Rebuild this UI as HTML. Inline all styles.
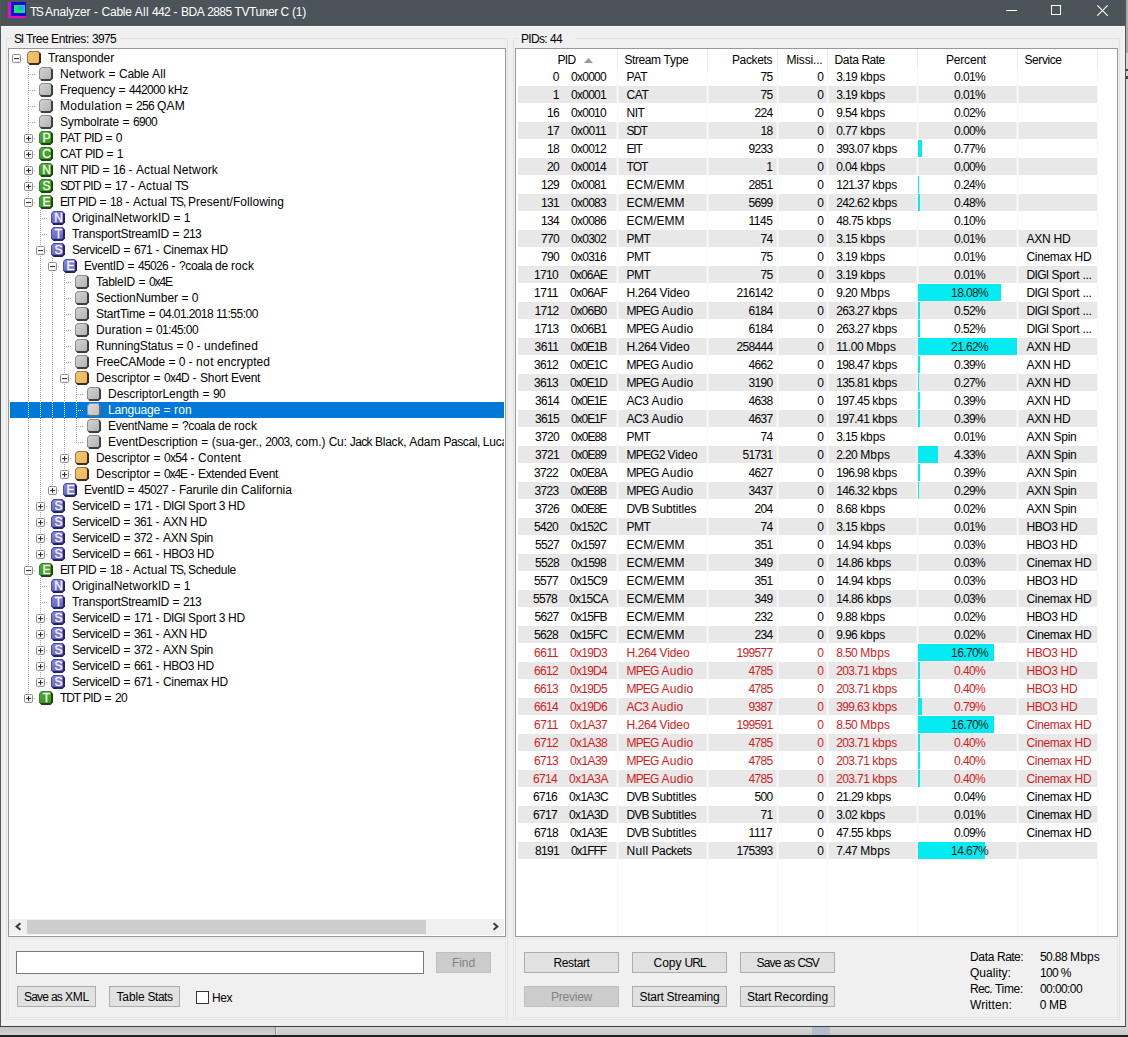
<!DOCTYPE html><html><head><meta charset="utf-8"><title>TS Analyzer</title><style>
html,body{margin:0;padding:0}
body{width:1128px;height:1037px;overflow:hidden;position:relative;background:#c9c9c9;font-family:"Liberation Sans",sans-serif;font-size:12px;line-height:16px}
#w div,#w svg,#w span,#w i{position:absolute;display:block}
#w span{white-space:pre;height:16px}
#w .k{top:0}
.ex{width:9px;height:9px;box-sizing:border-box;border:1px solid #8e8e90;border-radius:1.5px;background:linear-gradient(135deg,#fff 30%,#e4e4ee)}
.ic{width:14px;height:14px;clip-path:polygon(2.5px 0,11.5px 0,14px 2.5px,14px 11.5px,11.5px 14px,2.5px 14px,0 11.5px,0 2.5px)}
.ic:before{content:"";position:absolute;left:1px;top:1px;width:11.4px;height:11.4px;clip-path:polygon(1.9px 0,9.5px 0,11.4px 1.9px,11.4px 9.5px,9.5px 11.4px,1.9px 11.4px,0 9.5px,0 1.9px)}
.icg{background:linear-gradient(135deg,#8e8e8e 50%,#3e3e3e 50%)}
.icg:before{background:linear-gradient(135deg,#d4d4d4,#b2b2b2)}
.ics{background:linear-gradient(135deg,#7c9cc8 50%,#5a6c88 50%)}
.ics:before{background:linear-gradient(135deg,#e2dcd8,#c4bcb8)}
.ico{background:linear-gradient(135deg,#9a7840 50%,#3e2e14 50%)}
.ico:before{background:linear-gradient(135deg,#f6c864,#e6b668)}
.icG{background:linear-gradient(135deg,#3a8426 50%,#184a0e 50%)}
.icG:before{background:linear-gradient(170deg,#4cac32,#3c9428)}
.icB{background:linear-gradient(135deg,#4c4ca4 50%,#24245c 50%)}
.icB:before{background:linear-gradient(170deg,#8686ec,#6262c4)}
.ic b{position:absolute;left:0.5px;top:0;width:14px;height:14px;text-align:center;color:#f4fff0;font-size:12px;line-height:15px;font-weight:normal;-webkit-text-stroke:0.3px #f4fff0}
</style></head><body><div id="w">
<div style="left:0px;top:0px;width:1128px;height:1037px;background:#c9c9c9"></div>
<div style="left:1126px;top:0px;width:2px;height:53px;background:#a9a9a9"></div>
<div style="left:1126px;top:53px;width:2px;height:982px;background:#d2d2d2"></div>
<div style="left:1126px;top:69px;width:2px;height:2px;background:#444"></div>
<div style="left:1126px;top:76px;width:2px;height:3px;background:#444"></div>
<div style="left:0px;top:1027px;width:1128px;height:8px;background:linear-gradient(#c4c4c2,#d4d4d2)"></div>
<div style="left:275px;top:1027px;width:1px;height:8px;background:#8c8c8c"></div>
<div style="left:276px;top:1027px;width:852px;height:8px;background:linear-gradient(#d6d6d4,#cacac8)"></div>
<div style="left:276px;top:1028px;width:1px;height:7px;background:#e6e6e4"></div>
<div style="left:812px;top:1027px;width:18px;height:8px;background:#b4bccb"></div>
<div style="left:0px;top:1035px;width:1128px;height:2px;background:#1e2226"></div>
<div style="left:0px;top:0px;width:1126px;height:1027px;background:#f0f0f0"></div>
<div style="left:0px;top:0px;width:1126px;height:26px;background:#4b5459"></div>
<div style="left:0px;top:26px;width:1126px;height:1px;background:#fafafa"></div>
<div style="left:0px;top:0px;width:1px;height:1027px;background:#50565a"></div>
<div style="left:1125px;top:0px;width:1px;height:1027px;background:#50565a"></div>
<div style="left:0px;top:1026px;width:1126px;height:1px;background:#3c3f41"></div>
<div style="left:8px;top:2px;width:18px;height:16px;background:#e010c0"></div>
<div style="left:11px;top:2px;width:15px;height:14px;background:#1408e8"></div>
<div style="left:14px;top:5px;width:11px;height:8px;background:linear-gradient(90deg,#10f040,#20d890)"></div>
<div style="left:18px;top:6px;width:6px;height:4px;background:#28a8e8"></div>
<div style="left:1006px;top:10px;width:11px;height:1px;background:#fff"></div>
<div style="left:1051px;top:5px;width:10px;height:10px;border:1px solid #fff;box-sizing:border-box"></div>
<svg style="left:1097px;top:5px" width="11" height="11" viewBox="0 0 11 11"><path d="M0.3 0.3L10.7 10.7M10.7 0.3L0.3 10.7" stroke="#fff" stroke-width="1.1" fill="none"/></svg>
<div style="left:6px;top:38px;width:502px;height:982px;border:1px solid #e2e2e2;box-sizing:border-box"></div>
<div style="left:513px;top:38px;width:607px;height:982px;border:1px solid #e2e2e2;box-sizing:border-box"></div>
<div style="left:8px;top:938px;width:498px;height:80px;border:1px solid #e6e6e6;box-sizing:border-box"></div>
<div style="left:515px;top:938px;width:603px;height:80px;border:1px solid #e6e6e6;box-sizing:border-box"></div>
<div style="left:12px;top:30px;width:108px;height:16px;background:#f0f0f0"></div>
<div style="left:519px;top:30px;width:56px;height:16px;background:#f0f0f0"></div>
<div style="left:8px;top:48px;width:498px;height:889px;background:#fff;border:1px solid #96989b;box-sizing:border-box"></div>
<div style="left:22px;top:58px;width:1px;height:1px;background:repeating-linear-gradient(90deg,#a3a3a3 0 1px,transparent 1px 2px)"></div>
<div class="ex" style="left:12px;top:54px"><i style="left:1px;top:3px;width:5px;height:1px;background:#2e2e3e"></i></div>
<div class="ic ico" style="left:27px;top:51px"></div>
<div style="left:28px;top:66px;width:1px;height:16px;background:repeating-linear-gradient(180deg,#a3a3a3 0 1px,transparent 1px 2px)"></div>
<div style="left:30px;top:74px;width:5px;height:1px;background:repeating-linear-gradient(90deg,#a3a3a3 0 1px,transparent 1px 2px)"></div>
<div class="ic icg" style="left:39px;top:67px"></div>
<div style="left:28px;top:82px;width:1px;height:16px;background:repeating-linear-gradient(180deg,#a3a3a3 0 1px,transparent 1px 2px)"></div>
<div style="left:30px;top:90px;width:5px;height:1px;background:repeating-linear-gradient(90deg,#a3a3a3 0 1px,transparent 1px 2px)"></div>
<div class="ic icg" style="left:39px;top:83px"></div>
<div style="left:28px;top:98px;width:1px;height:16px;background:repeating-linear-gradient(180deg,#a3a3a3 0 1px,transparent 1px 2px)"></div>
<div style="left:30px;top:106px;width:5px;height:1px;background:repeating-linear-gradient(90deg,#a3a3a3 0 1px,transparent 1px 2px)"></div>
<div class="ic icg" style="left:39px;top:99px"></div>
<div style="left:28px;top:114px;width:1px;height:16px;background:repeating-linear-gradient(180deg,#a3a3a3 0 1px,transparent 1px 2px)"></div>
<div style="left:30px;top:122px;width:5px;height:1px;background:repeating-linear-gradient(90deg,#a3a3a3 0 1px,transparent 1px 2px)"></div>
<div class="ic icg" style="left:39px;top:115px"></div>
<div style="left:28px;top:130px;width:1px;height:16px;background:repeating-linear-gradient(180deg,#a3a3a3 0 1px,transparent 1px 2px)"></div>
<div style="left:34px;top:138px;width:1px;height:1px;background:repeating-linear-gradient(90deg,#a3a3a3 0 1px,transparent 1px 2px)"></div>
<div class="ex" style="left:24px;top:134px"><i style="left:1px;top:3px;width:5px;height:1px;background:#2e2e3e"></i><i style="left:3px;top:1px;width:1px;height:5px;background:#2e2e3e"></i></div>
<div class="ic icG" style="left:39px;top:131px"><b>P</b></div>
<div style="left:28px;top:146px;width:1px;height:16px;background:repeating-linear-gradient(180deg,#a3a3a3 0 1px,transparent 1px 2px)"></div>
<div style="left:34px;top:154px;width:1px;height:1px;background:repeating-linear-gradient(90deg,#a3a3a3 0 1px,transparent 1px 2px)"></div>
<div class="ex" style="left:24px;top:150px"><i style="left:1px;top:3px;width:5px;height:1px;background:#2e2e3e"></i><i style="left:3px;top:1px;width:1px;height:5px;background:#2e2e3e"></i></div>
<div class="ic icG" style="left:39px;top:147px"><b>C</b></div>
<div style="left:28px;top:162px;width:1px;height:16px;background:repeating-linear-gradient(180deg,#a3a3a3 0 1px,transparent 1px 2px)"></div>
<div style="left:34px;top:170px;width:1px;height:1px;background:repeating-linear-gradient(90deg,#a3a3a3 0 1px,transparent 1px 2px)"></div>
<div class="ex" style="left:24px;top:166px"><i style="left:1px;top:3px;width:5px;height:1px;background:#2e2e3e"></i><i style="left:3px;top:1px;width:1px;height:5px;background:#2e2e3e"></i></div>
<div class="ic icG" style="left:39px;top:163px"><b>N</b></div>
<div style="left:28px;top:178px;width:1px;height:16px;background:repeating-linear-gradient(180deg,#a3a3a3 0 1px,transparent 1px 2px)"></div>
<div style="left:34px;top:186px;width:1px;height:1px;background:repeating-linear-gradient(90deg,#a3a3a3 0 1px,transparent 1px 2px)"></div>
<div class="ex" style="left:24px;top:182px"><i style="left:1px;top:3px;width:5px;height:1px;background:#2e2e3e"></i><i style="left:3px;top:1px;width:1px;height:5px;background:#2e2e3e"></i></div>
<div class="ic icG" style="left:39px;top:179px"><b>S</b></div>
<div style="left:28px;top:194px;width:1px;height:16px;background:repeating-linear-gradient(180deg,#a3a3a3 0 1px,transparent 1px 2px)"></div>
<div style="left:34px;top:202px;width:1px;height:1px;background:repeating-linear-gradient(90deg,#a3a3a3 0 1px,transparent 1px 2px)"></div>
<div class="ex" style="left:24px;top:198px"><i style="left:1px;top:3px;width:5px;height:1px;background:#2e2e3e"></i></div>
<div class="ic icG" style="left:39px;top:195px"><b>E</b></div>
<div style="left:28px;top:210px;width:1px;height:16px;background:repeating-linear-gradient(180deg,#a3a3a3 0 1px,transparent 1px 2px)"></div>
<div style="left:40px;top:210px;width:1px;height:16px;background:repeating-linear-gradient(180deg,#a3a3a3 0 1px,transparent 1px 2px)"></div>
<div style="left:42px;top:218px;width:5px;height:1px;background:repeating-linear-gradient(90deg,#a3a3a3 0 1px,transparent 1px 2px)"></div>
<div class="ic icB" style="left:51px;top:211px"><b>N</b></div>
<div style="left:28px;top:226px;width:1px;height:16px;background:repeating-linear-gradient(180deg,#a3a3a3 0 1px,transparent 1px 2px)"></div>
<div style="left:40px;top:226px;width:1px;height:16px;background:repeating-linear-gradient(180deg,#a3a3a3 0 1px,transparent 1px 2px)"></div>
<div style="left:42px;top:234px;width:5px;height:1px;background:repeating-linear-gradient(90deg,#a3a3a3 0 1px,transparent 1px 2px)"></div>
<div class="ic icB" style="left:51px;top:227px"><b>T</b></div>
<div style="left:28px;top:242px;width:1px;height:16px;background:repeating-linear-gradient(180deg,#a3a3a3 0 1px,transparent 1px 2px)"></div>
<div style="left:40px;top:242px;width:1px;height:16px;background:repeating-linear-gradient(180deg,#a3a3a3 0 1px,transparent 1px 2px)"></div>
<div style="left:46px;top:250px;width:1px;height:1px;background:repeating-linear-gradient(90deg,#a3a3a3 0 1px,transparent 1px 2px)"></div>
<div class="ex" style="left:36px;top:246px"><i style="left:1px;top:3px;width:5px;height:1px;background:#2e2e3e"></i></div>
<div class="ic icB" style="left:51px;top:243px"><b>S</b></div>
<div style="left:28px;top:258px;width:1px;height:16px;background:repeating-linear-gradient(180deg,#a3a3a3 0 1px,transparent 1px 2px)"></div>
<div style="left:40px;top:258px;width:1px;height:16px;background:repeating-linear-gradient(180deg,#a3a3a3 0 1px,transparent 1px 2px)"></div>
<div style="left:52px;top:258px;width:1px;height:16px;background:repeating-linear-gradient(180deg,#a3a3a3 0 1px,transparent 1px 2px)"></div>
<div style="left:58px;top:266px;width:1px;height:1px;background:repeating-linear-gradient(90deg,#a3a3a3 0 1px,transparent 1px 2px)"></div>
<div class="ex" style="left:48px;top:262px"><i style="left:1px;top:3px;width:5px;height:1px;background:#2e2e3e"></i></div>
<div class="ic icB" style="left:63px;top:259px"><b>E</b></div>
<div style="left:28px;top:274px;width:1px;height:16px;background:repeating-linear-gradient(180deg,#a3a3a3 0 1px,transparent 1px 2px)"></div>
<div style="left:40px;top:274px;width:1px;height:16px;background:repeating-linear-gradient(180deg,#a3a3a3 0 1px,transparent 1px 2px)"></div>
<div style="left:52px;top:274px;width:1px;height:16px;background:repeating-linear-gradient(180deg,#a3a3a3 0 1px,transparent 1px 2px)"></div>
<div style="left:64px;top:274px;width:1px;height:16px;background:repeating-linear-gradient(180deg,#a3a3a3 0 1px,transparent 1px 2px)"></div>
<div style="left:66px;top:282px;width:5px;height:1px;background:repeating-linear-gradient(90deg,#a3a3a3 0 1px,transparent 1px 2px)"></div>
<div class="ic icg" style="left:75px;top:275px"></div>
<div style="left:28px;top:290px;width:1px;height:16px;background:repeating-linear-gradient(180deg,#a3a3a3 0 1px,transparent 1px 2px)"></div>
<div style="left:40px;top:290px;width:1px;height:16px;background:repeating-linear-gradient(180deg,#a3a3a3 0 1px,transparent 1px 2px)"></div>
<div style="left:52px;top:290px;width:1px;height:16px;background:repeating-linear-gradient(180deg,#a3a3a3 0 1px,transparent 1px 2px)"></div>
<div style="left:64px;top:290px;width:1px;height:16px;background:repeating-linear-gradient(180deg,#a3a3a3 0 1px,transparent 1px 2px)"></div>
<div style="left:66px;top:298px;width:5px;height:1px;background:repeating-linear-gradient(90deg,#a3a3a3 0 1px,transparent 1px 2px)"></div>
<div class="ic icg" style="left:75px;top:291px"></div>
<div style="left:28px;top:306px;width:1px;height:16px;background:repeating-linear-gradient(180deg,#a3a3a3 0 1px,transparent 1px 2px)"></div>
<div style="left:40px;top:306px;width:1px;height:16px;background:repeating-linear-gradient(180deg,#a3a3a3 0 1px,transparent 1px 2px)"></div>
<div style="left:52px;top:306px;width:1px;height:16px;background:repeating-linear-gradient(180deg,#a3a3a3 0 1px,transparent 1px 2px)"></div>
<div style="left:64px;top:306px;width:1px;height:16px;background:repeating-linear-gradient(180deg,#a3a3a3 0 1px,transparent 1px 2px)"></div>
<div style="left:66px;top:314px;width:5px;height:1px;background:repeating-linear-gradient(90deg,#a3a3a3 0 1px,transparent 1px 2px)"></div>
<div class="ic icg" style="left:75px;top:307px"></div>
<div style="left:28px;top:322px;width:1px;height:16px;background:repeating-linear-gradient(180deg,#a3a3a3 0 1px,transparent 1px 2px)"></div>
<div style="left:40px;top:322px;width:1px;height:16px;background:repeating-linear-gradient(180deg,#a3a3a3 0 1px,transparent 1px 2px)"></div>
<div style="left:52px;top:322px;width:1px;height:16px;background:repeating-linear-gradient(180deg,#a3a3a3 0 1px,transparent 1px 2px)"></div>
<div style="left:64px;top:322px;width:1px;height:16px;background:repeating-linear-gradient(180deg,#a3a3a3 0 1px,transparent 1px 2px)"></div>
<div style="left:66px;top:330px;width:5px;height:1px;background:repeating-linear-gradient(90deg,#a3a3a3 0 1px,transparent 1px 2px)"></div>
<div class="ic icg" style="left:75px;top:323px"></div>
<div style="left:28px;top:338px;width:1px;height:16px;background:repeating-linear-gradient(180deg,#a3a3a3 0 1px,transparent 1px 2px)"></div>
<div style="left:40px;top:338px;width:1px;height:16px;background:repeating-linear-gradient(180deg,#a3a3a3 0 1px,transparent 1px 2px)"></div>
<div style="left:52px;top:338px;width:1px;height:16px;background:repeating-linear-gradient(180deg,#a3a3a3 0 1px,transparent 1px 2px)"></div>
<div style="left:64px;top:338px;width:1px;height:16px;background:repeating-linear-gradient(180deg,#a3a3a3 0 1px,transparent 1px 2px)"></div>
<div style="left:66px;top:346px;width:5px;height:1px;background:repeating-linear-gradient(90deg,#a3a3a3 0 1px,transparent 1px 2px)"></div>
<div class="ic icg" style="left:75px;top:339px"></div>
<div style="left:28px;top:354px;width:1px;height:16px;background:repeating-linear-gradient(180deg,#a3a3a3 0 1px,transparent 1px 2px)"></div>
<div style="left:40px;top:354px;width:1px;height:16px;background:repeating-linear-gradient(180deg,#a3a3a3 0 1px,transparent 1px 2px)"></div>
<div style="left:52px;top:354px;width:1px;height:16px;background:repeating-linear-gradient(180deg,#a3a3a3 0 1px,transparent 1px 2px)"></div>
<div style="left:64px;top:354px;width:1px;height:16px;background:repeating-linear-gradient(180deg,#a3a3a3 0 1px,transparent 1px 2px)"></div>
<div style="left:66px;top:362px;width:5px;height:1px;background:repeating-linear-gradient(90deg,#a3a3a3 0 1px,transparent 1px 2px)"></div>
<div class="ic icg" style="left:75px;top:355px"></div>
<div style="left:28px;top:370px;width:1px;height:16px;background:repeating-linear-gradient(180deg,#a3a3a3 0 1px,transparent 1px 2px)"></div>
<div style="left:40px;top:370px;width:1px;height:16px;background:repeating-linear-gradient(180deg,#a3a3a3 0 1px,transparent 1px 2px)"></div>
<div style="left:52px;top:370px;width:1px;height:16px;background:repeating-linear-gradient(180deg,#a3a3a3 0 1px,transparent 1px 2px)"></div>
<div style="left:64px;top:370px;width:1px;height:16px;background:repeating-linear-gradient(180deg,#a3a3a3 0 1px,transparent 1px 2px)"></div>
<div style="left:70px;top:378px;width:1px;height:1px;background:repeating-linear-gradient(90deg,#a3a3a3 0 1px,transparent 1px 2px)"></div>
<div class="ex" style="left:60px;top:374px"><i style="left:1px;top:3px;width:5px;height:1px;background:#2e2e3e"></i></div>
<div class="ic ico" style="left:75px;top:371px"></div>
<div style="left:28px;top:386px;width:1px;height:16px;background:repeating-linear-gradient(180deg,#a3a3a3 0 1px,transparent 1px 2px)"></div>
<div style="left:40px;top:386px;width:1px;height:16px;background:repeating-linear-gradient(180deg,#a3a3a3 0 1px,transparent 1px 2px)"></div>
<div style="left:52px;top:386px;width:1px;height:16px;background:repeating-linear-gradient(180deg,#a3a3a3 0 1px,transparent 1px 2px)"></div>
<div style="left:64px;top:386px;width:1px;height:16px;background:repeating-linear-gradient(180deg,#a3a3a3 0 1px,transparent 1px 2px)"></div>
<div style="left:76px;top:386px;width:1px;height:16px;background:repeating-linear-gradient(180deg,#a3a3a3 0 1px,transparent 1px 2px)"></div>
<div style="left:78px;top:394px;width:5px;height:1px;background:repeating-linear-gradient(90deg,#a3a3a3 0 1px,transparent 1px 2px)"></div>
<div class="ic icg" style="left:87px;top:387px"></div>
<div style="left:10px;top:402px;width:494px;height:16px;background:#0078d7"></div>
<div style="left:28px;top:402px;width:1px;height:16px;background:repeating-linear-gradient(180deg,#fff 0 1px,transparent 1px 2px)"></div>
<div style="left:40px;top:402px;width:1px;height:16px;background:repeating-linear-gradient(180deg,#fff 0 1px,transparent 1px 2px)"></div>
<div style="left:52px;top:402px;width:1px;height:16px;background:repeating-linear-gradient(180deg,#fff 0 1px,transparent 1px 2px)"></div>
<div style="left:64px;top:402px;width:1px;height:16px;background:repeating-linear-gradient(180deg,#fff 0 1px,transparent 1px 2px)"></div>
<div style="left:76px;top:402px;width:1px;height:16px;background:repeating-linear-gradient(180deg,#fff 0 1px,transparent 1px 2px)"></div>
<div style="left:78px;top:410px;width:5px;height:1px;background:repeating-linear-gradient(90deg,#fff 0 1px,transparent 1px 2px)"></div>
<div class="ic ics" style="left:87px;top:403px"></div>
<div style="left:28px;top:418px;width:1px;height:16px;background:repeating-linear-gradient(180deg,#a3a3a3 0 1px,transparent 1px 2px)"></div>
<div style="left:40px;top:418px;width:1px;height:16px;background:repeating-linear-gradient(180deg,#a3a3a3 0 1px,transparent 1px 2px)"></div>
<div style="left:52px;top:418px;width:1px;height:16px;background:repeating-linear-gradient(180deg,#a3a3a3 0 1px,transparent 1px 2px)"></div>
<div style="left:64px;top:418px;width:1px;height:16px;background:repeating-linear-gradient(180deg,#a3a3a3 0 1px,transparent 1px 2px)"></div>
<div style="left:76px;top:418px;width:1px;height:16px;background:repeating-linear-gradient(180deg,#a3a3a3 0 1px,transparent 1px 2px)"></div>
<div style="left:78px;top:426px;width:5px;height:1px;background:repeating-linear-gradient(90deg,#a3a3a3 0 1px,transparent 1px 2px)"></div>
<div class="ic icg" style="left:87px;top:419px"></div>
<div style="left:28px;top:434px;width:1px;height:16px;background:repeating-linear-gradient(180deg,#a3a3a3 0 1px,transparent 1px 2px)"></div>
<div style="left:40px;top:434px;width:1px;height:16px;background:repeating-linear-gradient(180deg,#a3a3a3 0 1px,transparent 1px 2px)"></div>
<div style="left:52px;top:434px;width:1px;height:16px;background:repeating-linear-gradient(180deg,#a3a3a3 0 1px,transparent 1px 2px)"></div>
<div style="left:64px;top:434px;width:1px;height:16px;background:repeating-linear-gradient(180deg,#a3a3a3 0 1px,transparent 1px 2px)"></div>
<div style="left:76px;top:434px;width:1px;height:9px;background:repeating-linear-gradient(180deg,#a3a3a3 0 1px,transparent 1px 2px)"></div>
<div style="left:78px;top:442px;width:5px;height:1px;background:repeating-linear-gradient(90deg,#a3a3a3 0 1px,transparent 1px 2px)"></div>
<div class="ic icg" style="left:87px;top:435px"></div>
<div style="left:28px;top:450px;width:1px;height:16px;background:repeating-linear-gradient(180deg,#a3a3a3 0 1px,transparent 1px 2px)"></div>
<div style="left:40px;top:450px;width:1px;height:16px;background:repeating-linear-gradient(180deg,#a3a3a3 0 1px,transparent 1px 2px)"></div>
<div style="left:52px;top:450px;width:1px;height:16px;background:repeating-linear-gradient(180deg,#a3a3a3 0 1px,transparent 1px 2px)"></div>
<div style="left:64px;top:450px;width:1px;height:16px;background:repeating-linear-gradient(180deg,#a3a3a3 0 1px,transparent 1px 2px)"></div>
<div style="left:70px;top:458px;width:1px;height:1px;background:repeating-linear-gradient(90deg,#a3a3a3 0 1px,transparent 1px 2px)"></div>
<div class="ex" style="left:60px;top:454px"><i style="left:1px;top:3px;width:5px;height:1px;background:#2e2e3e"></i><i style="left:3px;top:1px;width:1px;height:5px;background:#2e2e3e"></i></div>
<div class="ic ico" style="left:75px;top:451px"></div>
<div style="left:28px;top:466px;width:1px;height:16px;background:repeating-linear-gradient(180deg,#a3a3a3 0 1px,transparent 1px 2px)"></div>
<div style="left:40px;top:466px;width:1px;height:16px;background:repeating-linear-gradient(180deg,#a3a3a3 0 1px,transparent 1px 2px)"></div>
<div style="left:52px;top:466px;width:1px;height:16px;background:repeating-linear-gradient(180deg,#a3a3a3 0 1px,transparent 1px 2px)"></div>
<div style="left:64px;top:466px;width:1px;height:9px;background:repeating-linear-gradient(180deg,#a3a3a3 0 1px,transparent 1px 2px)"></div>
<div style="left:70px;top:474px;width:1px;height:1px;background:repeating-linear-gradient(90deg,#a3a3a3 0 1px,transparent 1px 2px)"></div>
<div class="ex" style="left:60px;top:470px"><i style="left:1px;top:3px;width:5px;height:1px;background:#2e2e3e"></i><i style="left:3px;top:1px;width:1px;height:5px;background:#2e2e3e"></i></div>
<div class="ic ico" style="left:75px;top:467px"></div>
<div style="left:28px;top:482px;width:1px;height:16px;background:repeating-linear-gradient(180deg,#a3a3a3 0 1px,transparent 1px 2px)"></div>
<div style="left:40px;top:482px;width:1px;height:16px;background:repeating-linear-gradient(180deg,#a3a3a3 0 1px,transparent 1px 2px)"></div>
<div style="left:52px;top:482px;width:1px;height:9px;background:repeating-linear-gradient(180deg,#a3a3a3 0 1px,transparent 1px 2px)"></div>
<div style="left:58px;top:490px;width:1px;height:1px;background:repeating-linear-gradient(90deg,#a3a3a3 0 1px,transparent 1px 2px)"></div>
<div class="ex" style="left:48px;top:486px"><i style="left:1px;top:3px;width:5px;height:1px;background:#2e2e3e"></i><i style="left:3px;top:1px;width:1px;height:5px;background:#2e2e3e"></i></div>
<div class="ic icB" style="left:63px;top:483px"><b>E</b></div>
<div style="left:28px;top:498px;width:1px;height:16px;background:repeating-linear-gradient(180deg,#a3a3a3 0 1px,transparent 1px 2px)"></div>
<div style="left:40px;top:498px;width:1px;height:16px;background:repeating-linear-gradient(180deg,#a3a3a3 0 1px,transparent 1px 2px)"></div>
<div style="left:46px;top:506px;width:1px;height:1px;background:repeating-linear-gradient(90deg,#a3a3a3 0 1px,transparent 1px 2px)"></div>
<div class="ex" style="left:36px;top:502px"><i style="left:1px;top:3px;width:5px;height:1px;background:#2e2e3e"></i><i style="left:3px;top:1px;width:1px;height:5px;background:#2e2e3e"></i></div>
<div class="ic icB" style="left:51px;top:499px"><b>S</b></div>
<div style="left:28px;top:514px;width:1px;height:16px;background:repeating-linear-gradient(180deg,#a3a3a3 0 1px,transparent 1px 2px)"></div>
<div style="left:40px;top:514px;width:1px;height:16px;background:repeating-linear-gradient(180deg,#a3a3a3 0 1px,transparent 1px 2px)"></div>
<div style="left:46px;top:522px;width:1px;height:1px;background:repeating-linear-gradient(90deg,#a3a3a3 0 1px,transparent 1px 2px)"></div>
<div class="ex" style="left:36px;top:518px"><i style="left:1px;top:3px;width:5px;height:1px;background:#2e2e3e"></i><i style="left:3px;top:1px;width:1px;height:5px;background:#2e2e3e"></i></div>
<div class="ic icB" style="left:51px;top:515px"><b>S</b></div>
<div style="left:28px;top:530px;width:1px;height:16px;background:repeating-linear-gradient(180deg,#a3a3a3 0 1px,transparent 1px 2px)"></div>
<div style="left:40px;top:530px;width:1px;height:16px;background:repeating-linear-gradient(180deg,#a3a3a3 0 1px,transparent 1px 2px)"></div>
<div style="left:46px;top:538px;width:1px;height:1px;background:repeating-linear-gradient(90deg,#a3a3a3 0 1px,transparent 1px 2px)"></div>
<div class="ex" style="left:36px;top:534px"><i style="left:1px;top:3px;width:5px;height:1px;background:#2e2e3e"></i><i style="left:3px;top:1px;width:1px;height:5px;background:#2e2e3e"></i></div>
<div class="ic icB" style="left:51px;top:531px"><b>S</b></div>
<div style="left:28px;top:546px;width:1px;height:16px;background:repeating-linear-gradient(180deg,#a3a3a3 0 1px,transparent 1px 2px)"></div>
<div style="left:40px;top:546px;width:1px;height:9px;background:repeating-linear-gradient(180deg,#a3a3a3 0 1px,transparent 1px 2px)"></div>
<div style="left:46px;top:554px;width:1px;height:1px;background:repeating-linear-gradient(90deg,#a3a3a3 0 1px,transparent 1px 2px)"></div>
<div class="ex" style="left:36px;top:550px"><i style="left:1px;top:3px;width:5px;height:1px;background:#2e2e3e"></i><i style="left:3px;top:1px;width:1px;height:5px;background:#2e2e3e"></i></div>
<div class="ic icB" style="left:51px;top:547px"><b>S</b></div>
<div style="left:28px;top:562px;width:1px;height:16px;background:repeating-linear-gradient(180deg,#a3a3a3 0 1px,transparent 1px 2px)"></div>
<div style="left:34px;top:570px;width:1px;height:1px;background:repeating-linear-gradient(90deg,#a3a3a3 0 1px,transparent 1px 2px)"></div>
<div class="ex" style="left:24px;top:566px"><i style="left:1px;top:3px;width:5px;height:1px;background:#2e2e3e"></i></div>
<div class="ic icG" style="left:39px;top:563px"><b>E</b></div>
<div style="left:28px;top:578px;width:1px;height:16px;background:repeating-linear-gradient(180deg,#a3a3a3 0 1px,transparent 1px 2px)"></div>
<div style="left:40px;top:578px;width:1px;height:16px;background:repeating-linear-gradient(180deg,#a3a3a3 0 1px,transparent 1px 2px)"></div>
<div style="left:42px;top:586px;width:5px;height:1px;background:repeating-linear-gradient(90deg,#a3a3a3 0 1px,transparent 1px 2px)"></div>
<div class="ic icB" style="left:51px;top:579px"><b>N</b></div>
<div style="left:28px;top:594px;width:1px;height:16px;background:repeating-linear-gradient(180deg,#a3a3a3 0 1px,transparent 1px 2px)"></div>
<div style="left:40px;top:594px;width:1px;height:16px;background:repeating-linear-gradient(180deg,#a3a3a3 0 1px,transparent 1px 2px)"></div>
<div style="left:42px;top:602px;width:5px;height:1px;background:repeating-linear-gradient(90deg,#a3a3a3 0 1px,transparent 1px 2px)"></div>
<div class="ic icB" style="left:51px;top:595px"><b>T</b></div>
<div style="left:28px;top:610px;width:1px;height:16px;background:repeating-linear-gradient(180deg,#a3a3a3 0 1px,transparent 1px 2px)"></div>
<div style="left:40px;top:610px;width:1px;height:16px;background:repeating-linear-gradient(180deg,#a3a3a3 0 1px,transparent 1px 2px)"></div>
<div style="left:46px;top:618px;width:1px;height:1px;background:repeating-linear-gradient(90deg,#a3a3a3 0 1px,transparent 1px 2px)"></div>
<div class="ex" style="left:36px;top:614px"><i style="left:1px;top:3px;width:5px;height:1px;background:#2e2e3e"></i><i style="left:3px;top:1px;width:1px;height:5px;background:#2e2e3e"></i></div>
<div class="ic icB" style="left:51px;top:611px"><b>S</b></div>
<div style="left:28px;top:626px;width:1px;height:16px;background:repeating-linear-gradient(180deg,#a3a3a3 0 1px,transparent 1px 2px)"></div>
<div style="left:40px;top:626px;width:1px;height:16px;background:repeating-linear-gradient(180deg,#a3a3a3 0 1px,transparent 1px 2px)"></div>
<div style="left:46px;top:634px;width:1px;height:1px;background:repeating-linear-gradient(90deg,#a3a3a3 0 1px,transparent 1px 2px)"></div>
<div class="ex" style="left:36px;top:630px"><i style="left:1px;top:3px;width:5px;height:1px;background:#2e2e3e"></i><i style="left:3px;top:1px;width:1px;height:5px;background:#2e2e3e"></i></div>
<div class="ic icB" style="left:51px;top:627px"><b>S</b></div>
<div style="left:28px;top:642px;width:1px;height:16px;background:repeating-linear-gradient(180deg,#a3a3a3 0 1px,transparent 1px 2px)"></div>
<div style="left:40px;top:642px;width:1px;height:16px;background:repeating-linear-gradient(180deg,#a3a3a3 0 1px,transparent 1px 2px)"></div>
<div style="left:46px;top:650px;width:1px;height:1px;background:repeating-linear-gradient(90deg,#a3a3a3 0 1px,transparent 1px 2px)"></div>
<div class="ex" style="left:36px;top:646px"><i style="left:1px;top:3px;width:5px;height:1px;background:#2e2e3e"></i><i style="left:3px;top:1px;width:1px;height:5px;background:#2e2e3e"></i></div>
<div class="ic icB" style="left:51px;top:643px"><b>S</b></div>
<div style="left:28px;top:658px;width:1px;height:16px;background:repeating-linear-gradient(180deg,#a3a3a3 0 1px,transparent 1px 2px)"></div>
<div style="left:40px;top:658px;width:1px;height:16px;background:repeating-linear-gradient(180deg,#a3a3a3 0 1px,transparent 1px 2px)"></div>
<div style="left:46px;top:666px;width:1px;height:1px;background:repeating-linear-gradient(90deg,#a3a3a3 0 1px,transparent 1px 2px)"></div>
<div class="ex" style="left:36px;top:662px"><i style="left:1px;top:3px;width:5px;height:1px;background:#2e2e3e"></i><i style="left:3px;top:1px;width:1px;height:5px;background:#2e2e3e"></i></div>
<div class="ic icB" style="left:51px;top:659px"><b>S</b></div>
<div style="left:28px;top:674px;width:1px;height:16px;background:repeating-linear-gradient(180deg,#a3a3a3 0 1px,transparent 1px 2px)"></div>
<div style="left:40px;top:674px;width:1px;height:9px;background:repeating-linear-gradient(180deg,#a3a3a3 0 1px,transparent 1px 2px)"></div>
<div style="left:46px;top:682px;width:1px;height:1px;background:repeating-linear-gradient(90deg,#a3a3a3 0 1px,transparent 1px 2px)"></div>
<div class="ex" style="left:36px;top:678px"><i style="left:1px;top:3px;width:5px;height:1px;background:#2e2e3e"></i><i style="left:3px;top:1px;width:1px;height:5px;background:#2e2e3e"></i></div>
<div class="ic icB" style="left:51px;top:675px"><b>S</b></div>
<div style="left:28px;top:690px;width:1px;height:9px;background:repeating-linear-gradient(180deg,#a3a3a3 0 1px,transparent 1px 2px)"></div>
<div style="left:34px;top:698px;width:1px;height:1px;background:repeating-linear-gradient(90deg,#a3a3a3 0 1px,transparent 1px 2px)"></div>
<div class="ex" style="left:24px;top:694px"><i style="left:1px;top:3px;width:5px;height:1px;background:#2e2e3e"></i><i style="left:3px;top:1px;width:1px;height:5px;background:#2e2e3e"></i></div>
<div class="ic icG" style="left:39px;top:691px"><b>T</b></div>
<div style="left:9px;top:919px;width:495px;height:16px;background:#f0f0f0"></div>
<div style="left:27px;top:920px;width:399px;height:14px;background:#cdcdcd"></div>
<svg style="left:14px;top:922px" width="8" height="9" viewBox="0 0 8 9"><path d="M6.4 1.2L2.6 4.5L6.4 7.8" stroke="#3a3a3a" stroke-width="2" fill="none"/></svg>
<svg style="left:492px;top:922px" width="8" height="9" viewBox="0 0 8 9"><path d="M1.6 1.2L5.4 4.5L1.6 7.8" stroke="#3a3a3a" stroke-width="2" fill="none"/></svg>
<div style="left:16px;top:951px;width:408px;height:23px;background:#fff;border:1px solid #7a7a7a;box-sizing:border-box"></div>
<div style="left:436px;top:952px;width:55px;height:21px;background:#cccccc;border:1px solid #bfbfbf;box-sizing:border-box"></div>
<div style="left:17px;top:986px;width:79px;height:21px;background:#e1e1e1;border:1px solid #adadad;box-sizing:border-box"></div>
<div style="left:109px;top:986px;width:71px;height:21px;background:#e1e1e1;border:1px solid #adadad;box-sizing:border-box"></div>
<div style="left:196px;top:991px;width:13px;height:13px;background:#fff;border:1px solid #333;box-sizing:border-box"></div>
<div style="left:515px;top:48px;width:603px;height:889px;background:#fff;border:1px solid #96989b;box-sizing:border-box"></div>
<div style="left:617px;top:49px;width:1px;height:19px;background:#ebebeb"></div>
<div style="left:707px;top:49px;width:1px;height:19px;background:#ebebeb"></div>
<div style="left:777px;top:49px;width:1px;height:19px;background:#ebebeb"></div>
<div style="left:827px;top:49px;width:1px;height:19px;background:#ebebeb"></div>
<div style="left:917px;top:49px;width:1px;height:19px;background:#ebebeb"></div>
<div style="left:1017px;top:49px;width:1px;height:19px;background:#ebebeb"></div>
<div style="left:1097px;top:49px;width:1px;height:19px;background:#ebebeb"></div>
<div style="left:617px;top:68px;width:1px;height:868px;background:#f7f7f7"></div>
<div style="left:707px;top:68px;width:1px;height:868px;background:#f7f7f7"></div>
<div style="left:777px;top:68px;width:1px;height:868px;background:#f7f7f7"></div>
<div style="left:827px;top:68px;width:1px;height:868px;background:#f7f7f7"></div>
<div style="left:917px;top:68px;width:1px;height:868px;background:#f7f7f7"></div>
<div style="left:1017px;top:68px;width:1px;height:868px;background:#f7f7f7"></div>
<div style="left:1097px;top:68px;width:1px;height:868px;background:#f7f7f7"></div>
<svg style="left:584px;top:58px" width="9" height="5" viewBox="0 0 9 5"><path d="M0 5L4.5 0L9 5Z" fill="#9a9a9a"/></svg>
<div style="left:518px;top:86px;width:579px;height:17px;background:#e8e8e8"></div>
<div style="left:616px;top:86px;width:3px;height:17px;background:linear-gradient(90deg,#ebebeb,#f9f9f9 50%,#ebebeb)"></div>
<div style="left:706px;top:86px;width:3px;height:17px;background:linear-gradient(90deg,#ebebeb,#f9f9f9 50%,#ebebeb)"></div>
<div style="left:776px;top:86px;width:3px;height:17px;background:linear-gradient(90deg,#ebebeb,#f9f9f9 50%,#ebebeb)"></div>
<div style="left:826px;top:86px;width:3px;height:17px;background:linear-gradient(90deg,#ebebeb,#f9f9f9 50%,#ebebeb)"></div>
<div style="left:916px;top:86px;width:3px;height:17px;background:linear-gradient(90deg,#ebebeb,#f9f9f9 50%,#ebebeb)"></div>
<div style="left:1016px;top:86px;width:3px;height:17px;background:linear-gradient(90deg,#ebebeb,#f9f9f9 50%,#ebebeb)"></div>
<div style="left:518px;top:122px;width:579px;height:17px;background:#e8e8e8"></div>
<div style="left:616px;top:122px;width:3px;height:17px;background:linear-gradient(90deg,#ebebeb,#f9f9f9 50%,#ebebeb)"></div>
<div style="left:706px;top:122px;width:3px;height:17px;background:linear-gradient(90deg,#ebebeb,#f9f9f9 50%,#ebebeb)"></div>
<div style="left:776px;top:122px;width:3px;height:17px;background:linear-gradient(90deg,#ebebeb,#f9f9f9 50%,#ebebeb)"></div>
<div style="left:826px;top:122px;width:3px;height:17px;background:linear-gradient(90deg,#ebebeb,#f9f9f9 50%,#ebebeb)"></div>
<div style="left:916px;top:122px;width:3px;height:17px;background:linear-gradient(90deg,#ebebeb,#f9f9f9 50%,#ebebeb)"></div>
<div style="left:1016px;top:122px;width:3px;height:17px;background:linear-gradient(90deg,#ebebeb,#f9f9f9 50%,#ebebeb)"></div>
<div style="left:918px;top:140px;width:4px;height:17px;background:#04ecf2"></div>
<div style="left:518px;top:158px;width:579px;height:17px;background:#e8e8e8"></div>
<div style="left:616px;top:158px;width:3px;height:17px;background:linear-gradient(90deg,#ebebeb,#f9f9f9 50%,#ebebeb)"></div>
<div style="left:706px;top:158px;width:3px;height:17px;background:linear-gradient(90deg,#ebebeb,#f9f9f9 50%,#ebebeb)"></div>
<div style="left:776px;top:158px;width:3px;height:17px;background:linear-gradient(90deg,#ebebeb,#f9f9f9 50%,#ebebeb)"></div>
<div style="left:826px;top:158px;width:3px;height:17px;background:linear-gradient(90deg,#ebebeb,#f9f9f9 50%,#ebebeb)"></div>
<div style="left:916px;top:158px;width:3px;height:17px;background:linear-gradient(90deg,#ebebeb,#f9f9f9 50%,#ebebeb)"></div>
<div style="left:1016px;top:158px;width:3px;height:17px;background:linear-gradient(90deg,#ebebeb,#f9f9f9 50%,#ebebeb)"></div>
<div style="left:918px;top:176px;width:1px;height:17px;background:#04ecf2"></div>
<div style="left:518px;top:194px;width:579px;height:17px;background:#e8e8e8"></div>
<div style="left:616px;top:194px;width:3px;height:17px;background:linear-gradient(90deg,#ebebeb,#f9f9f9 50%,#ebebeb)"></div>
<div style="left:706px;top:194px;width:3px;height:17px;background:linear-gradient(90deg,#ebebeb,#f9f9f9 50%,#ebebeb)"></div>
<div style="left:776px;top:194px;width:3px;height:17px;background:linear-gradient(90deg,#ebebeb,#f9f9f9 50%,#ebebeb)"></div>
<div style="left:826px;top:194px;width:3px;height:17px;background:linear-gradient(90deg,#ebebeb,#f9f9f9 50%,#ebebeb)"></div>
<div style="left:916px;top:194px;width:3px;height:17px;background:linear-gradient(90deg,#ebebeb,#f9f9f9 50%,#ebebeb)"></div>
<div style="left:1016px;top:194px;width:3px;height:17px;background:linear-gradient(90deg,#ebebeb,#f9f9f9 50%,#ebebeb)"></div>
<div style="left:918px;top:194px;width:2px;height:17px;background:#04ecf2"></div>
<div style="left:518px;top:230px;width:579px;height:17px;background:#e8e8e8"></div>
<div style="left:616px;top:230px;width:3px;height:17px;background:linear-gradient(90deg,#ebebeb,#f9f9f9 50%,#ebebeb)"></div>
<div style="left:706px;top:230px;width:3px;height:17px;background:linear-gradient(90deg,#ebebeb,#f9f9f9 50%,#ebebeb)"></div>
<div style="left:776px;top:230px;width:3px;height:17px;background:linear-gradient(90deg,#ebebeb,#f9f9f9 50%,#ebebeb)"></div>
<div style="left:826px;top:230px;width:3px;height:17px;background:linear-gradient(90deg,#ebebeb,#f9f9f9 50%,#ebebeb)"></div>
<div style="left:916px;top:230px;width:3px;height:17px;background:linear-gradient(90deg,#ebebeb,#f9f9f9 50%,#ebebeb)"></div>
<div style="left:1016px;top:230px;width:3px;height:17px;background:linear-gradient(90deg,#ebebeb,#f9f9f9 50%,#ebebeb)"></div>
<div style="left:518px;top:266px;width:579px;height:17px;background:#e8e8e8"></div>
<div style="left:616px;top:266px;width:3px;height:17px;background:linear-gradient(90deg,#ebebeb,#f9f9f9 50%,#ebebeb)"></div>
<div style="left:706px;top:266px;width:3px;height:17px;background:linear-gradient(90deg,#ebebeb,#f9f9f9 50%,#ebebeb)"></div>
<div style="left:776px;top:266px;width:3px;height:17px;background:linear-gradient(90deg,#ebebeb,#f9f9f9 50%,#ebebeb)"></div>
<div style="left:826px;top:266px;width:3px;height:17px;background:linear-gradient(90deg,#ebebeb,#f9f9f9 50%,#ebebeb)"></div>
<div style="left:916px;top:266px;width:3px;height:17px;background:linear-gradient(90deg,#ebebeb,#f9f9f9 50%,#ebebeb)"></div>
<div style="left:1016px;top:266px;width:3px;height:17px;background:linear-gradient(90deg,#ebebeb,#f9f9f9 50%,#ebebeb)"></div>
<div style="left:918px;top:284px;width:83px;height:17px;background:#04ecf2"></div>
<div style="left:518px;top:302px;width:579px;height:17px;background:#e8e8e8"></div>
<div style="left:616px;top:302px;width:3px;height:17px;background:linear-gradient(90deg,#ebebeb,#f9f9f9 50%,#ebebeb)"></div>
<div style="left:706px;top:302px;width:3px;height:17px;background:linear-gradient(90deg,#ebebeb,#f9f9f9 50%,#ebebeb)"></div>
<div style="left:776px;top:302px;width:3px;height:17px;background:linear-gradient(90deg,#ebebeb,#f9f9f9 50%,#ebebeb)"></div>
<div style="left:826px;top:302px;width:3px;height:17px;background:linear-gradient(90deg,#ebebeb,#f9f9f9 50%,#ebebeb)"></div>
<div style="left:916px;top:302px;width:3px;height:17px;background:linear-gradient(90deg,#ebebeb,#f9f9f9 50%,#ebebeb)"></div>
<div style="left:1016px;top:302px;width:3px;height:17px;background:linear-gradient(90deg,#ebebeb,#f9f9f9 50%,#ebebeb)"></div>
<div style="left:918px;top:302px;width:2px;height:17px;background:#04ecf2"></div>
<div style="left:918px;top:320px;width:2px;height:17px;background:#04ecf2"></div>
<div style="left:518px;top:338px;width:579px;height:17px;background:#e8e8e8"></div>
<div style="left:616px;top:338px;width:3px;height:17px;background:linear-gradient(90deg,#ebebeb,#f9f9f9 50%,#ebebeb)"></div>
<div style="left:706px;top:338px;width:3px;height:17px;background:linear-gradient(90deg,#ebebeb,#f9f9f9 50%,#ebebeb)"></div>
<div style="left:776px;top:338px;width:3px;height:17px;background:linear-gradient(90deg,#ebebeb,#f9f9f9 50%,#ebebeb)"></div>
<div style="left:826px;top:338px;width:3px;height:17px;background:linear-gradient(90deg,#ebebeb,#f9f9f9 50%,#ebebeb)"></div>
<div style="left:916px;top:338px;width:3px;height:17px;background:linear-gradient(90deg,#ebebeb,#f9f9f9 50%,#ebebeb)"></div>
<div style="left:1016px;top:338px;width:3px;height:17px;background:linear-gradient(90deg,#ebebeb,#f9f9f9 50%,#ebebeb)"></div>
<div style="left:918px;top:338px;width:99px;height:17px;background:#04ecf2"></div>
<div style="left:918px;top:356px;width:2px;height:17px;background:#04ecf2"></div>
<div style="left:518px;top:374px;width:579px;height:17px;background:#e8e8e8"></div>
<div style="left:616px;top:374px;width:3px;height:17px;background:linear-gradient(90deg,#ebebeb,#f9f9f9 50%,#ebebeb)"></div>
<div style="left:706px;top:374px;width:3px;height:17px;background:linear-gradient(90deg,#ebebeb,#f9f9f9 50%,#ebebeb)"></div>
<div style="left:776px;top:374px;width:3px;height:17px;background:linear-gradient(90deg,#ebebeb,#f9f9f9 50%,#ebebeb)"></div>
<div style="left:826px;top:374px;width:3px;height:17px;background:linear-gradient(90deg,#ebebeb,#f9f9f9 50%,#ebebeb)"></div>
<div style="left:916px;top:374px;width:3px;height:17px;background:linear-gradient(90deg,#ebebeb,#f9f9f9 50%,#ebebeb)"></div>
<div style="left:1016px;top:374px;width:3px;height:17px;background:linear-gradient(90deg,#ebebeb,#f9f9f9 50%,#ebebeb)"></div>
<div style="left:918px;top:374px;width:1px;height:17px;background:#04ecf2"></div>
<div style="left:918px;top:392px;width:2px;height:17px;background:#04ecf2"></div>
<div style="left:518px;top:410px;width:579px;height:17px;background:#e8e8e8"></div>
<div style="left:616px;top:410px;width:3px;height:17px;background:linear-gradient(90deg,#ebebeb,#f9f9f9 50%,#ebebeb)"></div>
<div style="left:706px;top:410px;width:3px;height:17px;background:linear-gradient(90deg,#ebebeb,#f9f9f9 50%,#ebebeb)"></div>
<div style="left:776px;top:410px;width:3px;height:17px;background:linear-gradient(90deg,#ebebeb,#f9f9f9 50%,#ebebeb)"></div>
<div style="left:826px;top:410px;width:3px;height:17px;background:linear-gradient(90deg,#ebebeb,#f9f9f9 50%,#ebebeb)"></div>
<div style="left:916px;top:410px;width:3px;height:17px;background:linear-gradient(90deg,#ebebeb,#f9f9f9 50%,#ebebeb)"></div>
<div style="left:1016px;top:410px;width:3px;height:17px;background:linear-gradient(90deg,#ebebeb,#f9f9f9 50%,#ebebeb)"></div>
<div style="left:918px;top:410px;width:2px;height:17px;background:#04ecf2"></div>
<div style="left:518px;top:446px;width:579px;height:17px;background:#e8e8e8"></div>
<div style="left:616px;top:446px;width:3px;height:17px;background:linear-gradient(90deg,#ebebeb,#f9f9f9 50%,#ebebeb)"></div>
<div style="left:706px;top:446px;width:3px;height:17px;background:linear-gradient(90deg,#ebebeb,#f9f9f9 50%,#ebebeb)"></div>
<div style="left:776px;top:446px;width:3px;height:17px;background:linear-gradient(90deg,#ebebeb,#f9f9f9 50%,#ebebeb)"></div>
<div style="left:826px;top:446px;width:3px;height:17px;background:linear-gradient(90deg,#ebebeb,#f9f9f9 50%,#ebebeb)"></div>
<div style="left:916px;top:446px;width:3px;height:17px;background:linear-gradient(90deg,#ebebeb,#f9f9f9 50%,#ebebeb)"></div>
<div style="left:1016px;top:446px;width:3px;height:17px;background:linear-gradient(90deg,#ebebeb,#f9f9f9 50%,#ebebeb)"></div>
<div style="left:918px;top:446px;width:20px;height:17px;background:#04ecf2"></div>
<div style="left:918px;top:464px;width:2px;height:17px;background:#04ecf2"></div>
<div style="left:518px;top:482px;width:579px;height:17px;background:#e8e8e8"></div>
<div style="left:616px;top:482px;width:3px;height:17px;background:linear-gradient(90deg,#ebebeb,#f9f9f9 50%,#ebebeb)"></div>
<div style="left:706px;top:482px;width:3px;height:17px;background:linear-gradient(90deg,#ebebeb,#f9f9f9 50%,#ebebeb)"></div>
<div style="left:776px;top:482px;width:3px;height:17px;background:linear-gradient(90deg,#ebebeb,#f9f9f9 50%,#ebebeb)"></div>
<div style="left:826px;top:482px;width:3px;height:17px;background:linear-gradient(90deg,#ebebeb,#f9f9f9 50%,#ebebeb)"></div>
<div style="left:916px;top:482px;width:3px;height:17px;background:linear-gradient(90deg,#ebebeb,#f9f9f9 50%,#ebebeb)"></div>
<div style="left:1016px;top:482px;width:3px;height:17px;background:linear-gradient(90deg,#ebebeb,#f9f9f9 50%,#ebebeb)"></div>
<div style="left:918px;top:482px;width:1px;height:17px;background:#04ecf2"></div>
<div style="left:518px;top:518px;width:579px;height:17px;background:#e8e8e8"></div>
<div style="left:616px;top:518px;width:3px;height:17px;background:linear-gradient(90deg,#ebebeb,#f9f9f9 50%,#ebebeb)"></div>
<div style="left:706px;top:518px;width:3px;height:17px;background:linear-gradient(90deg,#ebebeb,#f9f9f9 50%,#ebebeb)"></div>
<div style="left:776px;top:518px;width:3px;height:17px;background:linear-gradient(90deg,#ebebeb,#f9f9f9 50%,#ebebeb)"></div>
<div style="left:826px;top:518px;width:3px;height:17px;background:linear-gradient(90deg,#ebebeb,#f9f9f9 50%,#ebebeb)"></div>
<div style="left:916px;top:518px;width:3px;height:17px;background:linear-gradient(90deg,#ebebeb,#f9f9f9 50%,#ebebeb)"></div>
<div style="left:1016px;top:518px;width:3px;height:17px;background:linear-gradient(90deg,#ebebeb,#f9f9f9 50%,#ebebeb)"></div>
<div style="left:518px;top:554px;width:579px;height:17px;background:#e8e8e8"></div>
<div style="left:616px;top:554px;width:3px;height:17px;background:linear-gradient(90deg,#ebebeb,#f9f9f9 50%,#ebebeb)"></div>
<div style="left:706px;top:554px;width:3px;height:17px;background:linear-gradient(90deg,#ebebeb,#f9f9f9 50%,#ebebeb)"></div>
<div style="left:776px;top:554px;width:3px;height:17px;background:linear-gradient(90deg,#ebebeb,#f9f9f9 50%,#ebebeb)"></div>
<div style="left:826px;top:554px;width:3px;height:17px;background:linear-gradient(90deg,#ebebeb,#f9f9f9 50%,#ebebeb)"></div>
<div style="left:916px;top:554px;width:3px;height:17px;background:linear-gradient(90deg,#ebebeb,#f9f9f9 50%,#ebebeb)"></div>
<div style="left:1016px;top:554px;width:3px;height:17px;background:linear-gradient(90deg,#ebebeb,#f9f9f9 50%,#ebebeb)"></div>
<div style="left:518px;top:590px;width:579px;height:17px;background:#e8e8e8"></div>
<div style="left:616px;top:590px;width:3px;height:17px;background:linear-gradient(90deg,#ebebeb,#f9f9f9 50%,#ebebeb)"></div>
<div style="left:706px;top:590px;width:3px;height:17px;background:linear-gradient(90deg,#ebebeb,#f9f9f9 50%,#ebebeb)"></div>
<div style="left:776px;top:590px;width:3px;height:17px;background:linear-gradient(90deg,#ebebeb,#f9f9f9 50%,#ebebeb)"></div>
<div style="left:826px;top:590px;width:3px;height:17px;background:linear-gradient(90deg,#ebebeb,#f9f9f9 50%,#ebebeb)"></div>
<div style="left:916px;top:590px;width:3px;height:17px;background:linear-gradient(90deg,#ebebeb,#f9f9f9 50%,#ebebeb)"></div>
<div style="left:1016px;top:590px;width:3px;height:17px;background:linear-gradient(90deg,#ebebeb,#f9f9f9 50%,#ebebeb)"></div>
<div style="left:518px;top:626px;width:579px;height:17px;background:#e8e8e8"></div>
<div style="left:616px;top:626px;width:3px;height:17px;background:linear-gradient(90deg,#ebebeb,#f9f9f9 50%,#ebebeb)"></div>
<div style="left:706px;top:626px;width:3px;height:17px;background:linear-gradient(90deg,#ebebeb,#f9f9f9 50%,#ebebeb)"></div>
<div style="left:776px;top:626px;width:3px;height:17px;background:linear-gradient(90deg,#ebebeb,#f9f9f9 50%,#ebebeb)"></div>
<div style="left:826px;top:626px;width:3px;height:17px;background:linear-gradient(90deg,#ebebeb,#f9f9f9 50%,#ebebeb)"></div>
<div style="left:916px;top:626px;width:3px;height:17px;background:linear-gradient(90deg,#ebebeb,#f9f9f9 50%,#ebebeb)"></div>
<div style="left:1016px;top:626px;width:3px;height:17px;background:linear-gradient(90deg,#ebebeb,#f9f9f9 50%,#ebebeb)"></div>
<div style="left:918px;top:644px;width:76px;height:17px;background:#04ecf2"></div>
<div style="left:518px;top:662px;width:579px;height:17px;background:#e8e8e8"></div>
<div style="left:616px;top:662px;width:3px;height:17px;background:linear-gradient(90deg,#ebebeb,#f9f9f9 50%,#ebebeb)"></div>
<div style="left:706px;top:662px;width:3px;height:17px;background:linear-gradient(90deg,#ebebeb,#f9f9f9 50%,#ebebeb)"></div>
<div style="left:776px;top:662px;width:3px;height:17px;background:linear-gradient(90deg,#ebebeb,#f9f9f9 50%,#ebebeb)"></div>
<div style="left:826px;top:662px;width:3px;height:17px;background:linear-gradient(90deg,#ebebeb,#f9f9f9 50%,#ebebeb)"></div>
<div style="left:916px;top:662px;width:3px;height:17px;background:linear-gradient(90deg,#ebebeb,#f9f9f9 50%,#ebebeb)"></div>
<div style="left:1016px;top:662px;width:3px;height:17px;background:linear-gradient(90deg,#ebebeb,#f9f9f9 50%,#ebebeb)"></div>
<div style="left:918px;top:662px;width:2px;height:17px;background:#04ecf2"></div>
<div style="left:918px;top:680px;width:2px;height:17px;background:#04ecf2"></div>
<div style="left:518px;top:698px;width:579px;height:17px;background:#e8e8e8"></div>
<div style="left:616px;top:698px;width:3px;height:17px;background:linear-gradient(90deg,#ebebeb,#f9f9f9 50%,#ebebeb)"></div>
<div style="left:706px;top:698px;width:3px;height:17px;background:linear-gradient(90deg,#ebebeb,#f9f9f9 50%,#ebebeb)"></div>
<div style="left:776px;top:698px;width:3px;height:17px;background:linear-gradient(90deg,#ebebeb,#f9f9f9 50%,#ebebeb)"></div>
<div style="left:826px;top:698px;width:3px;height:17px;background:linear-gradient(90deg,#ebebeb,#f9f9f9 50%,#ebebeb)"></div>
<div style="left:916px;top:698px;width:3px;height:17px;background:linear-gradient(90deg,#ebebeb,#f9f9f9 50%,#ebebeb)"></div>
<div style="left:1016px;top:698px;width:3px;height:17px;background:linear-gradient(90deg,#ebebeb,#f9f9f9 50%,#ebebeb)"></div>
<div style="left:918px;top:698px;width:4px;height:17px;background:#04ecf2"></div>
<div style="left:918px;top:716px;width:76px;height:17px;background:#04ecf2"></div>
<div style="left:518px;top:734px;width:579px;height:17px;background:#e8e8e8"></div>
<div style="left:616px;top:734px;width:3px;height:17px;background:linear-gradient(90deg,#ebebeb,#f9f9f9 50%,#ebebeb)"></div>
<div style="left:706px;top:734px;width:3px;height:17px;background:linear-gradient(90deg,#ebebeb,#f9f9f9 50%,#ebebeb)"></div>
<div style="left:776px;top:734px;width:3px;height:17px;background:linear-gradient(90deg,#ebebeb,#f9f9f9 50%,#ebebeb)"></div>
<div style="left:826px;top:734px;width:3px;height:17px;background:linear-gradient(90deg,#ebebeb,#f9f9f9 50%,#ebebeb)"></div>
<div style="left:916px;top:734px;width:3px;height:17px;background:linear-gradient(90deg,#ebebeb,#f9f9f9 50%,#ebebeb)"></div>
<div style="left:1016px;top:734px;width:3px;height:17px;background:linear-gradient(90deg,#ebebeb,#f9f9f9 50%,#ebebeb)"></div>
<div style="left:918px;top:734px;width:2px;height:17px;background:#04ecf2"></div>
<div style="left:918px;top:752px;width:2px;height:17px;background:#04ecf2"></div>
<div style="left:518px;top:770px;width:579px;height:17px;background:#e8e8e8"></div>
<div style="left:616px;top:770px;width:3px;height:17px;background:linear-gradient(90deg,#ebebeb,#f9f9f9 50%,#ebebeb)"></div>
<div style="left:706px;top:770px;width:3px;height:17px;background:linear-gradient(90deg,#ebebeb,#f9f9f9 50%,#ebebeb)"></div>
<div style="left:776px;top:770px;width:3px;height:17px;background:linear-gradient(90deg,#ebebeb,#f9f9f9 50%,#ebebeb)"></div>
<div style="left:826px;top:770px;width:3px;height:17px;background:linear-gradient(90deg,#ebebeb,#f9f9f9 50%,#ebebeb)"></div>
<div style="left:916px;top:770px;width:3px;height:17px;background:linear-gradient(90deg,#ebebeb,#f9f9f9 50%,#ebebeb)"></div>
<div style="left:1016px;top:770px;width:3px;height:17px;background:linear-gradient(90deg,#ebebeb,#f9f9f9 50%,#ebebeb)"></div>
<div style="left:918px;top:770px;width:2px;height:17px;background:#04ecf2"></div>
<div style="left:518px;top:806px;width:579px;height:17px;background:#e8e8e8"></div>
<div style="left:616px;top:806px;width:3px;height:17px;background:linear-gradient(90deg,#ebebeb,#f9f9f9 50%,#ebebeb)"></div>
<div style="left:706px;top:806px;width:3px;height:17px;background:linear-gradient(90deg,#ebebeb,#f9f9f9 50%,#ebebeb)"></div>
<div style="left:776px;top:806px;width:3px;height:17px;background:linear-gradient(90deg,#ebebeb,#f9f9f9 50%,#ebebeb)"></div>
<div style="left:826px;top:806px;width:3px;height:17px;background:linear-gradient(90deg,#ebebeb,#f9f9f9 50%,#ebebeb)"></div>
<div style="left:916px;top:806px;width:3px;height:17px;background:linear-gradient(90deg,#ebebeb,#f9f9f9 50%,#ebebeb)"></div>
<div style="left:1016px;top:806px;width:3px;height:17px;background:linear-gradient(90deg,#ebebeb,#f9f9f9 50%,#ebebeb)"></div>
<div style="left:518px;top:842px;width:579px;height:17px;background:#e8e8e8"></div>
<div style="left:616px;top:842px;width:3px;height:17px;background:linear-gradient(90deg,#ebebeb,#f9f9f9 50%,#ebebeb)"></div>
<div style="left:706px;top:842px;width:3px;height:17px;background:linear-gradient(90deg,#ebebeb,#f9f9f9 50%,#ebebeb)"></div>
<div style="left:776px;top:842px;width:3px;height:17px;background:linear-gradient(90deg,#ebebeb,#f9f9f9 50%,#ebebeb)"></div>
<div style="left:826px;top:842px;width:3px;height:17px;background:linear-gradient(90deg,#ebebeb,#f9f9f9 50%,#ebebeb)"></div>
<div style="left:916px;top:842px;width:3px;height:17px;background:linear-gradient(90deg,#ebebeb,#f9f9f9 50%,#ebebeb)"></div>
<div style="left:1016px;top:842px;width:3px;height:17px;background:linear-gradient(90deg,#ebebeb,#f9f9f9 50%,#ebebeb)"></div>
<div style="left:918px;top:842px;width:67px;height:17px;background:#04ecf2"></div>
<div style="left:524px;top:952px;width:95px;height:21px;background:#e1e1e1;border:1px solid #adadad;box-sizing:border-box"></div>
<div style="left:632px;top:952px;width:95px;height:21px;background:#e1e1e1;border:1px solid #adadad;box-sizing:border-box"></div>
<div style="left:740px;top:952px;width:95px;height:21px;background:#e1e1e1;border:1px solid #adadad;box-sizing:border-box"></div>
<div style="left:524px;top:986px;width:95px;height:21px;background:#cccccc;border:1px solid #bfbfbf;box-sizing:border-box"></div>
<div style="left:632px;top:986px;width:95px;height:21px;background:#e1e1e1;border:1px solid #adadad;box-sizing:border-box"></div>
<div style="left:740px;top:986px;width:95px;height:21px;background:#e1e1e1;border:1px solid #adadad;box-sizing:border-box"></div>
<span class="t" style="left:30.00px;top:4px;color:#fff;"><span class="k" style="left:0.00px;letter-spacing:-1.628px;">TS</span> <span class="k" style="left:15.11px;letter-spacing:-0.170px;">Analyzer</span> <span class="k" style="left:63.98px;">-</span> <span class="k" style="left:71.52px;letter-spacing:-0.228px;">Cable</span> <span class="k" style="left:104.76px;letter-spacing:0.253px;">All</span> <span class="k" style="left:121.88px;letter-spacing:-0.633px;">442</span> <span class="k" style="left:143.55px;">-</span> <span class="k" style="left:151.09px;letter-spacing:-0.507px;">BDA</span> <span class="k" style="left:177.28px;letter-spacing:-0.632px;">2885</span> <span class="k" style="left:204.48px;letter-spacing:-0.419px;">TVTuner</span> <span class="k" style="left:250.51px;">C</span> <span class="k" style="left:261.90px;letter-spacing:-0.190px;">(1)</span></span>
<span class="t" style="left:14.00px;top:31px;color:#000;"><span class="k" style="left:0.00px;letter-spacing:-1.172px;">SI</span> <span class="k" style="left:12.00px;letter-spacing:-0.559px;">Tree</span> <span class="k" style="left:37.00px;letter-spacing:-0.336px;">Entries:</span> <span class="k" style="left:78.00px;letter-spacing:-0.676px;">3975</span></span>
<span class="t" style="left:521.00px;top:31px;color:#000;"><span class="k" style="left:0.00px;letter-spacing:-0.669px;">PIDs:</span> <span class="k" style="left:29.00px;letter-spacing:-0.680px;">44</span></span>
<span class="t" style="left:48.00px;top:50px;color:#000;"><span class="k" style="left:0.00px;letter-spacing:-0.145px;">Transponder</span></span>
<span class="t" style="left:60.00px;top:66px;color:#000;"><span class="k" style="left:0.00px;letter-spacing:0.141px;">Network</span> <span class="k" style="left:48.49px;">=</span> <span class="k" style="left:59.00px;letter-spacing:-0.272px;">Cable</span> <span class="k" style="left:92.00px;letter-spacing:0.219px;">All</span></span>
<span class="t" style="left:60.00px;top:82px;color:#000;"><span class="k" style="left:0.00px;letter-spacing:-0.189px;">Frequency</span> <span class="k" style="left:58.49px;">=</span> <span class="k" style="left:69.00px;letter-spacing:-0.674px;">442000</span> <span class="k" style="left:108.00px;letter-spacing:-0.224px;">kHz</span></span>
<span class="t" style="left:60.00px;top:98px;color:#000;"><span class="k" style="left:0.00px;letter-spacing:0.328px;">Modulation</span> <span class="k" style="left:65.49px;">=</span> <span class="k" style="left:76.00px;letter-spacing:-0.677px;">256</span> <span class="k" style="left:97.00px;letter-spacing:0.219px;">QAM</span></span>
<span class="t" style="left:60.00px;top:114px;color:#000;"><span class="k" style="left:0.00px;letter-spacing:-0.170px;">Symbolrate</span> <span class="k" style="left:62.49px;">=</span> <span class="k" style="left:73.00px;letter-spacing:-0.676px;">6900</span></span>
<span class="t" style="left:60.00px;top:130px;color:#000;"><span class="k" style="left:0.00px;letter-spacing:-0.188px;">PAT</span> <span class="k" style="left:24.00px;letter-spacing:-0.672px;">PID</span> <span class="k" style="left:45.49px;">=</span> <span class="k" style="left:55.66px;">0</span></span>
<span class="t" style="left:60.00px;top:146px;color:#000;"><span class="k" style="left:0.00px;letter-spacing:-0.370px;">CAT</span> <span class="k" style="left:25.00px;letter-spacing:-0.672px;">PID</span> <span class="k" style="left:46.49px;">=</span> <span class="k" style="left:56.66px;">1</span></span>
<span class="t" style="left:60.00px;top:162px;color:#000;"><span class="k" style="left:0.00px;letter-spacing:-0.448px;">NIT</span> <span class="k" style="left:21.00px;letter-spacing:-0.672px;">PID</span> <span class="k" style="left:42.49px;">=</span> <span class="k" style="left:53.00px;letter-spacing:-0.680px;">16</span> <span class="k" style="left:68.50px;">-</span> <span class="k" style="left:76.00px;letter-spacing:0.107px;">Actual</span> <span class="k" style="left:113.00px;letter-spacing:0.141px;">Network</span></span>
<span class="t" style="left:60.00px;top:178px;color:#000;"><span class="k" style="left:0.00px;letter-spacing:-1.333px;">SDT</span> <span class="k" style="left:23.00px;letter-spacing:-0.672px;">PID</span> <span class="k" style="left:44.49px;">=</span> <span class="k" style="left:55.00px;letter-spacing:-0.680px;">17</span> <span class="k" style="left:70.50px;">-</span> <span class="k" style="left:78.00px;letter-spacing:0.107px;">Actual</span> <span class="k" style="left:115.00px;letter-spacing:-1.672px;">TS</span></span>
<span class="t" style="left:60.00px;top:194px;color:#000;"><span class="k" style="left:0.00px;letter-spacing:-1.224px;">EIT</span> <span class="k" style="left:18.00px;letter-spacing:-0.672px;">PID</span> <span class="k" style="left:39.49px;">=</span> <span class="k" style="left:50.00px;letter-spacing:-0.680px;">18</span> <span class="k" style="left:65.50px;">-</span> <span class="k" style="left:73.00px;letter-spacing:0.107px;">Actual</span> <span class="k" style="left:110.00px;letter-spacing:-1.224px;">TS,</span> <span class="k" style="left:128.00px;letter-spacing:0.036px;">Present/Following</span></span>
<span class="t" style="left:72.00px;top:210px;color:#000;"><span class="k" style="left:0.00px;letter-spacing:0.038px;">OriginalNetworkID</span> <span class="k" style="left:101.49px;">=</span> <span class="k" style="left:111.66px;">1</span></span>
<span class="t" style="left:72.00px;top:226px;color:#000;"><span class="k" style="left:0.00px;letter-spacing:-0.270px;">TransportStreamID</span> <span class="k" style="left:100.49px;">=</span> <span class="k" style="left:111.00px;letter-spacing:-0.677px;">213</span></span>
<span class="t" style="left:72.00px;top:242px;color:#000;"><span class="k" style="left:0.00px;letter-spacing:-0.446px;">ServiceID</span> <span class="k" style="left:51.49px;">=</span> <span class="k" style="left:62.00px;letter-spacing:-0.677px;">671</span> <span class="k" style="left:83.50px;">-</span> <span class="k" style="left:91.00px;letter-spacing:-0.337px;">Cinemax</span> <span class="k" style="left:139.00px;letter-spacing:-0.172px;">HD</span></span>
<span class="t" style="left:84.00px;top:258px;color:#000;"><span class="k" style="left:0.00px;letter-spacing:-0.384px;">EventID</span> <span class="k" style="left:43.49px;">=</span> <span class="k" style="left:54.00px;letter-spacing:-0.675px;">45026</span> <span class="k" style="left:87.50px;">-</span> <span class="k" style="left:95.00px;letter-spacing:-0.396px;">?coala</span> <span class="k" style="left:131.00px;letter-spacing:-0.180px;">de</span> <span class="k" style="left:147.00px;letter-spacing:0.082px;">rock</span></span>
<span class="t" style="left:96.00px;top:274px;color:#000;"><span class="k" style="left:0.00px;letter-spacing:-0.241px;">TableID</span> <span class="k" style="left:42.49px;">=</span> <span class="k" style="left:53.00px;letter-spacing:-1.090px;">0x4E</span></span>
<span class="t" style="left:96.00px;top:290px;color:#000;"><span class="k" style="left:0.00px;letter-spacing:-0.055px;">SectionNumber</span> <span class="k" style="left:85.49px;">=</span> <span class="k" style="left:95.66px;">0</span></span>
<span class="t" style="left:96.00px;top:306px;color:#000;"><span class="k" style="left:0.00px;letter-spacing:-0.285px;">StartTime</span> <span class="k" style="left:52.49px;">=</span> <span class="k" style="left:63.00px;letter-spacing:-0.606px;">04.01.2018</span> <span class="k" style="left:120.00px;letter-spacing:-0.479px;">11:55:00</span></span>
<span class="t" style="left:96.00px;top:322px;color:#000;"><span class="k" style="left:0.00px;letter-spacing:0.080px;">Duration</span> <span class="k" style="left:49.49px;">=</span> <span class="k" style="left:60.00px;letter-spacing:-0.590px;">01:45:00</span></span>
<span class="t" style="left:96.00px;top:338px;color:#000;"><span class="k" style="left:0.00px;letter-spacing:-0.133px;">RunningStatus</span> <span class="k" style="left:80.49px;">=</span> <span class="k" style="left:90.66px;">0</span> <span class="k" style="left:100.50px;">-</span> <span class="k" style="left:108.00px;letter-spacing:0.142px;">undefined</span></span>
<span class="t" style="left:96.00px;top:354px;color:#000;"><span class="k" style="left:0.00px;letter-spacing:-0.237px;">FreeCAMode</span> <span class="k" style="left:72.49px;">=</span> <span class="k" style="left:82.66px;">0</span> <span class="k" style="left:92.50px;">-</span> <span class="k" style="left:100.00px;letter-spacing:0.438px;">not</span> <span class="k" style="left:121.00px;letter-spacing:0.033px;">encrypted</span></span>
<span class="t" style="left:96.00px;top:370px;color:#000;"><span class="k" style="left:0.00px;letter-spacing:-0.069px;">Descriptor</span> <span class="k" style="left:57.49px;">=</span> <span class="k" style="left:68.00px;letter-spacing:-0.754px;">0x4D</span> <span class="k" style="left:96.50px;">-</span> <span class="k" style="left:104.00px;letter-spacing:-0.138px;">Short</span> <span class="k" style="left:135.00px;letter-spacing:-0.338px;">Event</span></span>
<span class="t" style="left:108.00px;top:386px;color:#000;"><span class="k" style="left:0.00px;letter-spacing:-0.024px;">DescriptorLength</span> <span class="k" style="left:94.49px;">=</span> <span class="k" style="left:105.00px;letter-spacing:-0.680px;">90</span></span>
<span class="t" style="left:108.00px;top:402px;color:#fff;"><span class="k" style="left:0.00px;letter-spacing:-0.174px;">Language</span> <span class="k" style="left:55.49px;">=</span> <span class="k" style="left:66.00px;letter-spacing:0.219px;">ron</span></span>
<span class="t" style="left:108.00px;top:418px;color:#000;"><span class="k" style="left:0.00px;letter-spacing:-0.300px;">EventName</span> <span class="k" style="left:63.49px;">=</span> <span class="k" style="left:74.00px;letter-spacing:-0.396px;">?coala</span> <span class="k" style="left:110.00px;letter-spacing:-0.180px;">de</span> <span class="k" style="left:126.00px;letter-spacing:0.082px;">rock</span></span>
<span class="t" style="left:108.00px;top:434px;color:#000;width:396px;overflow:hidden;"><span class="k" style="left:0.00px;letter-spacing:-0.065px;">EventDescription</span> <span class="k" style="left:93.22px;">=</span> <span class="k" style="left:103.78px;letter-spacing:-0.033px;">(sua-ger.,</span> <span class="k" style="left:157.18px;letter-spacing:-0.565px;">2003,</span> <span class="k" style="left:187.41px;letter-spacing:0.045px;">com.)</span> <span class="k" style="left:220.65px;letter-spacing:-0.184px;">Cu:</span> <span class="k" style="left:241.81px;letter-spacing:-0.630px;">Jack</span> <span class="k" style="left:267.00px;letter-spacing:-0.242px;">Black,</span> <span class="k" style="left:301.26px;letter-spacing:-0.031px;">Adam</span> <span class="k" style="left:335.52px;letter-spacing:-0.441px;">Pascal,</span> <span class="k" style="left:374.81px;letter-spacing:-0.211px;">Luca</span></span>
<span class="t" style="left:96.00px;top:450px;color:#000;"><span class="k" style="left:0.00px;letter-spacing:-0.069px;">Descriptor</span> <span class="k" style="left:57.49px;">=</span> <span class="k" style="left:68.00px;letter-spacing:-0.758px;">0x54</span> <span class="k" style="left:94.50px;">-</span> <span class="k" style="left:102.00px;letter-spacing:0.138px;">Content</span></span>
<span class="t" style="left:96.00px;top:466px;color:#000;"><span class="k" style="left:0.00px;letter-spacing:-0.069px;">Descriptor</span> <span class="k" style="left:57.49px;">=</span> <span class="k" style="left:68.00px;letter-spacing:-1.090px;">0x4E</span> <span class="k" style="left:94.50px;">-</span> <span class="k" style="left:102.00px;letter-spacing:-0.340px;">Extended</span> <span class="k" style="left:153.00px;letter-spacing:-0.338px;">Event</span></span>
<span class="t" style="left:84.00px;top:482px;color:#000;"><span class="k" style="left:0.00px;letter-spacing:-0.384px;">EventID</span> <span class="k" style="left:43.49px;">=</span> <span class="k" style="left:54.00px;letter-spacing:-0.675px;">45027</span> <span class="k" style="left:87.50px;">-</span> <span class="k" style="left:95.00px;letter-spacing:-0.211px;">Farurile</span> <span class="k" style="left:137.00px;letter-spacing:0.328px;">din</span> <span class="k" style="left:157.00px;letter-spacing:0.030px;">California</span></span>
<span class="t" style="left:72.00px;top:498px;color:#000;"><span class="k" style="left:0.00px;letter-spacing:-0.446px;">ServiceID</span> <span class="k" style="left:51.49px;">=</span> <span class="k" style="left:62.00px;letter-spacing:-0.677px;">171</span> <span class="k" style="left:83.50px;">-</span> <span class="k" style="left:91.00px;letter-spacing:-0.668px;">DIGI</span> <span class="k" style="left:116.00px;letter-spacing:-0.138px;">Sport</span> <span class="k" style="left:146.66px;">3</span> <span class="k" style="left:156.00px;letter-spacing:-0.172px;">HD</span></span>
<span class="t" style="left:72.00px;top:514px;color:#000;"><span class="k" style="left:0.00px;letter-spacing:-0.446px;">ServiceID</span> <span class="k" style="left:51.49px;">=</span> <span class="k" style="left:62.00px;letter-spacing:-0.677px;">361</span> <span class="k" style="left:83.50px;">-</span> <span class="k" style="left:91.00px;letter-spacing:-0.229px;">AXN</span> <span class="k" style="left:118.00px;letter-spacing:-0.172px;">HD</span></span>
<span class="t" style="left:72.00px;top:530px;color:#000;"><span class="k" style="left:0.00px;letter-spacing:-0.446px;">ServiceID</span> <span class="k" style="left:51.49px;">=</span> <span class="k" style="left:62.00px;letter-spacing:-0.677px;">372</span> <span class="k" style="left:83.50px;">-</span> <span class="k" style="left:91.00px;letter-spacing:-0.229px;">AXN</span> <span class="k" style="left:118.00px;letter-spacing:-0.258px;">Spin</span></span>
<span class="t" style="left:72.00px;top:546px;color:#000;"><span class="k" style="left:0.00px;letter-spacing:-0.446px;">ServiceID</span> <span class="k" style="left:51.49px;">=</span> <span class="k" style="left:62.00px;letter-spacing:-0.677px;">661</span> <span class="k" style="left:83.50px;">-</span> <span class="k" style="left:91.00px;letter-spacing:-0.422px;">HBO3</span> <span class="k" style="left:125.00px;letter-spacing:-0.172px;">HD</span></span>
<span class="t" style="left:60.00px;top:562px;color:#000;"><span class="k" style="left:0.00px;letter-spacing:-1.224px;">EIT</span> <span class="k" style="left:18.00px;letter-spacing:-0.672px;">PID</span> <span class="k" style="left:39.49px;">=</span> <span class="k" style="left:50.00px;letter-spacing:-0.680px;">18</span> <span class="k" style="left:65.50px;">-</span> <span class="k" style="left:73.00px;letter-spacing:0.107px;">Actual</span> <span class="k" style="left:110.00px;letter-spacing:-1.224px;">TS,</span> <span class="k" style="left:128.00px;letter-spacing:-0.256px;">Schedule</span></span>
<span class="t" style="left:72.00px;top:578px;color:#000;"><span class="k" style="left:0.00px;letter-spacing:0.038px;">OriginalNetworkID</span> <span class="k" style="left:101.49px;">=</span> <span class="k" style="left:111.66px;">1</span></span>
<span class="t" style="left:72.00px;top:594px;color:#000;"><span class="k" style="left:0.00px;letter-spacing:-0.270px;">TransportStreamID</span> <span class="k" style="left:100.49px;">=</span> <span class="k" style="left:111.00px;letter-spacing:-0.677px;">213</span></span>
<span class="t" style="left:72.00px;top:610px;color:#000;"><span class="k" style="left:0.00px;letter-spacing:-0.446px;">ServiceID</span> <span class="k" style="left:51.49px;">=</span> <span class="k" style="left:62.00px;letter-spacing:-0.677px;">171</span> <span class="k" style="left:83.50px;">-</span> <span class="k" style="left:91.00px;letter-spacing:-0.668px;">DIGI</span> <span class="k" style="left:116.00px;letter-spacing:-0.138px;">Sport</span> <span class="k" style="left:146.66px;">3</span> <span class="k" style="left:156.00px;letter-spacing:-0.172px;">HD</span></span>
<span class="t" style="left:72.00px;top:626px;color:#000;"><span class="k" style="left:0.00px;letter-spacing:-0.446px;">ServiceID</span> <span class="k" style="left:51.49px;">=</span> <span class="k" style="left:62.00px;letter-spacing:-0.677px;">361</span> <span class="k" style="left:83.50px;">-</span> <span class="k" style="left:91.00px;letter-spacing:-0.229px;">AXN</span> <span class="k" style="left:118.00px;letter-spacing:-0.172px;">HD</span></span>
<span class="t" style="left:72.00px;top:642px;color:#000;"><span class="k" style="left:0.00px;letter-spacing:-0.446px;">ServiceID</span> <span class="k" style="left:51.49px;">=</span> <span class="k" style="left:62.00px;letter-spacing:-0.677px;">372</span> <span class="k" style="left:83.50px;">-</span> <span class="k" style="left:91.00px;letter-spacing:-0.229px;">AXN</span> <span class="k" style="left:118.00px;letter-spacing:-0.258px;">Spin</span></span>
<span class="t" style="left:72.00px;top:658px;color:#000;"><span class="k" style="left:0.00px;letter-spacing:-0.446px;">ServiceID</span> <span class="k" style="left:51.49px;">=</span> <span class="k" style="left:62.00px;letter-spacing:-0.677px;">661</span> <span class="k" style="left:83.50px;">-</span> <span class="k" style="left:91.00px;letter-spacing:-0.422px;">HBO3</span> <span class="k" style="left:125.00px;letter-spacing:-0.172px;">HD</span></span>
<span class="t" style="left:72.00px;top:674px;color:#000;"><span class="k" style="left:0.00px;letter-spacing:-0.446px;">ServiceID</span> <span class="k" style="left:51.49px;">=</span> <span class="k" style="left:62.00px;letter-spacing:-0.677px;">671</span> <span class="k" style="left:83.50px;">-</span> <span class="k" style="left:91.00px;letter-spacing:-0.337px;">Cinemax</span> <span class="k" style="left:139.00px;letter-spacing:-0.172px;">HD</span></span>
<span class="t" style="left:60.00px;top:690px;color:#000;"><span class="k" style="left:0.00px;letter-spacing:-1.109px;">TDT</span> <span class="k" style="left:23.00px;letter-spacing:-0.672px;">PID</span> <span class="k" style="left:44.49px;">=</span> <span class="k" style="left:55.00px;letter-spacing:-0.680px;">20</span></span>
<span class="t" style="left:452.00px;top:954.5px;color:#838383;"><span class="k" style="left:0.00px;letter-spacing:-0.086px;">Find</span></span>
<span class="t" style="left:24.00px;top:988.5px;color:#000;"><span class="k" style="left:0.00px;letter-spacing:-0.840px;">Save</span> <span class="k" style="left:27.00px;letter-spacing:-0.844px;">as</span> <span class="k" style="left:41.00px;letter-spacing:-0.229px;">XML</span></span>
<span class="t" style="left:116.50px;top:988.5px;color:#000;"><span class="k" style="left:0.00px;letter-spacing:-0.138px;">Table</span> <span class="k" style="left:31.00px;letter-spacing:-0.472px;">Stats</span></span>
<span class="t" style="left:212.00px;top:990px;color:#000;"><span class="k" style="left:0.00px;letter-spacing:-0.448px;">Hex</span></span>
<span class="t" style="left:557.50px;top:52px;color:#000;"><span class="k" style="left:0.00px;letter-spacing:-0.672px;">PID</span></span>
<span class="t" style="left:624.50px;top:52px;color:#000;"><span class="k" style="left:0.00px;letter-spacing:-0.448px;">Stream</span> <span class="k" style="left:39.00px;letter-spacing:-0.254px;">Type</span></span>
<span class="t" style="left:732.00px;top:52px;color:#000;"><span class="k" style="left:0.00px;letter-spacing:-0.384px;">Packets</span></span>
<span class="t" style="left:786.50px;top:52px;color:#000;"><span class="k" style="left:0.00px;letter-spacing:-0.168px;">Missi...</span></span>
<span class="t" style="left:834.50px;top:52px;color:#000;"><span class="k" style="left:0.00px;letter-spacing:-0.340px;">Data</span> <span class="k" style="left:27.00px;letter-spacing:-0.590px;">Rate</span></span>
<span class="t" style="left:946.00px;top:52px;color:#000;"><span class="k" style="left:0.00px;letter-spacing:-0.194px;">Percent</span></span>
<span class="t" style="left:1024.50px;top:52px;color:#000;"><span class="k" style="left:0.00px;letter-spacing:-0.431px;">Service</span></span>
<span class="t" style="left:553.00px;top:69px;color:#000;"><span class="k" style="left:-0.34px;">0</span></span>
<span class="t" style="left:571.00px;top:69px;color:#000;"><span class="k" style="left:0.00px;letter-spacing:-0.729px;">0x0000</span></span>
<span class="t" style="left:626.50px;top:69px;color:#000;"><span class="k" style="left:0.00px;letter-spacing:-0.188px;">PAT</span></span>
<span class="t" style="left:760.50px;top:69px;color:#000;"><span class="k" style="left:0.00px;letter-spacing:-0.680px;">75</span></span>
<span class="t" style="left:817.50px;top:69px;color:#000;"><span class="k" style="left:-0.34px;">0</span></span>
<span class="t" style="left:836.20px;top:69px;color:#000;"><span class="k" style="left:0.00px;letter-spacing:-0.590px;">3.19</span> <span class="k" style="left:24.00px;letter-spacing:-0.090px;">kbps</span></span>
<span class="t" style="left:954.10px;top:69px;color:#000;"><span class="k" style="left:0.00px;letter-spacing:-0.606px;">0.01%</span></span>
<span class="t" style="left:553.00px;top:87px;color:#000;"><span class="k" style="left:-0.34px;">1</span></span>
<span class="t" style="left:571.00px;top:87px;color:#000;"><span class="k" style="left:0.00px;letter-spacing:-0.729px;">0x0001</span></span>
<span class="t" style="left:626.50px;top:87px;color:#000;"><span class="k" style="left:0.00px;letter-spacing:-0.370px;">CAT</span></span>
<span class="t" style="left:760.50px;top:87px;color:#000;"><span class="k" style="left:0.00px;letter-spacing:-0.680px;">75</span></span>
<span class="t" style="left:817.50px;top:87px;color:#000;"><span class="k" style="left:-0.34px;">0</span></span>
<span class="t" style="left:836.20px;top:87px;color:#000;"><span class="k" style="left:0.00px;letter-spacing:-0.590px;">3.19</span> <span class="k" style="left:24.00px;letter-spacing:-0.090px;">kbps</span></span>
<span class="t" style="left:954.10px;top:87px;color:#000;"><span class="k" style="left:0.00px;letter-spacing:-0.606px;">0.01%</span></span>
<span class="t" style="left:547.00px;top:105px;color:#000;"><span class="k" style="left:0.00px;letter-spacing:-0.680px;">16</span></span>
<span class="t" style="left:571.00px;top:105px;color:#000;"><span class="k" style="left:0.00px;letter-spacing:-0.729px;">0x0010</span></span>
<span class="t" style="left:626.50px;top:105px;color:#000;"><span class="k" style="left:0.00px;letter-spacing:-0.448px;">NIT</span></span>
<span class="t" style="left:754.50px;top:105px;color:#000;"><span class="k" style="left:0.00px;letter-spacing:-0.677px;">224</span></span>
<span class="t" style="left:817.50px;top:105px;color:#000;"><span class="k" style="left:-0.34px;">0</span></span>
<span class="t" style="left:836.20px;top:105px;color:#000;"><span class="k" style="left:0.00px;letter-spacing:-0.590px;">9.54</span> <span class="k" style="left:24.00px;letter-spacing:-0.090px;">kbps</span></span>
<span class="t" style="left:954.10px;top:105px;color:#000;"><span class="k" style="left:0.00px;letter-spacing:-0.606px;">0.02%</span></span>
<span class="t" style="left:547.00px;top:123px;color:#000;"><span class="k" style="left:0.00px;letter-spacing:-0.680px;">17</span></span>
<span class="t" style="left:571.00px;top:123px;color:#000;"><span class="k" style="left:0.00px;letter-spacing:-0.581px;">0x0011</span></span>
<span class="t" style="left:626.50px;top:123px;color:#000;"><span class="k" style="left:0.00px;letter-spacing:-1.333px;">SDT</span></span>
<span class="t" style="left:760.50px;top:123px;color:#000;"><span class="k" style="left:0.00px;letter-spacing:-0.680px;">18</span></span>
<span class="t" style="left:817.50px;top:123px;color:#000;"><span class="k" style="left:-0.34px;">0</span></span>
<span class="t" style="left:836.20px;top:123px;color:#000;"><span class="k" style="left:0.00px;letter-spacing:-0.590px;">0.77</span> <span class="k" style="left:24.00px;letter-spacing:-0.090px;">kbps</span></span>
<span class="t" style="left:954.10px;top:123px;color:#000;"><span class="k" style="left:0.00px;letter-spacing:-0.606px;">0.00%</span></span>
<span class="t" style="left:547.00px;top:141px;color:#000;"><span class="k" style="left:0.00px;letter-spacing:-0.680px;">18</span></span>
<span class="t" style="left:571.00px;top:141px;color:#000;"><span class="k" style="left:0.00px;letter-spacing:-0.729px;">0x0012</span></span>
<span class="t" style="left:626.50px;top:141px;color:#000;"><span class="k" style="left:0.00px;letter-spacing:-1.224px;">EIT</span></span>
<span class="t" style="left:748.50px;top:141px;color:#000;"><span class="k" style="left:0.00px;letter-spacing:-0.676px;">9233</span></span>
<span class="t" style="left:817.50px;top:141px;color:#000;"><span class="k" style="left:-0.34px;">0</span></span>
<span class="t" style="left:836.20px;top:141px;color:#000;"><span class="k" style="left:0.00px;letter-spacing:-0.617px;">393.07</span> <span class="k" style="left:36.00px;letter-spacing:-0.090px;">kbps</span></span>
<span class="t" style="left:954.10px;top:141px;color:#000;"><span class="k" style="left:0.00px;letter-spacing:-0.606px;">0.77%</span></span>
<span class="t" style="left:547.00px;top:159px;color:#000;"><span class="k" style="left:0.00px;letter-spacing:-0.680px;">20</span></span>
<span class="t" style="left:571.00px;top:159px;color:#000;"><span class="k" style="left:0.00px;letter-spacing:-0.729px;">0x0014</span></span>
<span class="t" style="left:626.50px;top:159px;color:#000;"><span class="k" style="left:0.00px;letter-spacing:-0.927px;">TOT</span></span>
<span class="t" style="left:766.50px;top:159px;color:#000;"><span class="k" style="left:-0.34px;">1</span></span>
<span class="t" style="left:817.50px;top:159px;color:#000;"><span class="k" style="left:-0.34px;">0</span></span>
<span class="t" style="left:836.20px;top:159px;color:#000;"><span class="k" style="left:0.00px;letter-spacing:-0.590px;">0.04</span> <span class="k" style="left:24.00px;letter-spacing:-0.090px;">kbps</span></span>
<span class="t" style="left:954.10px;top:159px;color:#000;"><span class="k" style="left:0.00px;letter-spacing:-0.606px;">0.00%</span></span>
<span class="t" style="left:541.00px;top:177px;color:#000;"><span class="k" style="left:0.00px;letter-spacing:-0.677px;">129</span></span>
<span class="t" style="left:571.00px;top:177px;color:#000;"><span class="k" style="left:0.00px;letter-spacing:-0.729px;">0x0081</span></span>
<span class="t" style="left:626.50px;top:177px;color:#000;"><span class="k" style="left:0.00px;letter-spacing:0.000px;">ECM/EMM</span></span>
<span class="t" style="left:748.50px;top:177px;color:#000;"><span class="k" style="left:0.00px;letter-spacing:-0.676px;">2851</span></span>
<span class="t" style="left:817.50px;top:177px;color:#000;"><span class="k" style="left:-0.34px;">0</span></span>
<span class="t" style="left:836.20px;top:177px;color:#000;"><span class="k" style="left:0.00px;letter-spacing:-0.617px;">121.37</span> <span class="k" style="left:36.00px;letter-spacing:-0.090px;">kbps</span></span>
<span class="t" style="left:954.10px;top:177px;color:#000;"><span class="k" style="left:0.00px;letter-spacing:-0.606px;">0.24%</span></span>
<span class="t" style="left:541.00px;top:195px;color:#000;"><span class="k" style="left:0.00px;letter-spacing:-0.677px;">131</span></span>
<span class="t" style="left:571.00px;top:195px;color:#000;"><span class="k" style="left:0.00px;letter-spacing:-0.729px;">0x0083</span></span>
<span class="t" style="left:626.50px;top:195px;color:#000;"><span class="k" style="left:0.00px;letter-spacing:0.000px;">ECM/EMM</span></span>
<span class="t" style="left:748.50px;top:195px;color:#000;"><span class="k" style="left:0.00px;letter-spacing:-0.676px;">5699</span></span>
<span class="t" style="left:817.50px;top:195px;color:#000;"><span class="k" style="left:-0.34px;">0</span></span>
<span class="t" style="left:836.20px;top:195px;color:#000;"><span class="k" style="left:0.00px;letter-spacing:-0.617px;">242.62</span> <span class="k" style="left:36.00px;letter-spacing:-0.090px;">kbps</span></span>
<span class="t" style="left:954.10px;top:195px;color:#000;"><span class="k" style="left:0.00px;letter-spacing:-0.606px;">0.48%</span></span>
<span class="t" style="left:541.00px;top:213px;color:#000;"><span class="k" style="left:0.00px;letter-spacing:-0.677px;">134</span></span>
<span class="t" style="left:571.00px;top:213px;color:#000;"><span class="k" style="left:0.00px;letter-spacing:-0.729px;">0x0086</span></span>
<span class="t" style="left:626.50px;top:213px;color:#000;"><span class="k" style="left:0.00px;letter-spacing:0.000px;">ECM/EMM</span></span>
<span class="t" style="left:748.50px;top:213px;color:#000;"><span class="k" style="left:0.00px;letter-spacing:-0.453px;">1145</span></span>
<span class="t" style="left:817.50px;top:213px;color:#000;"><span class="k" style="left:-0.34px;">0</span></span>
<span class="t" style="left:836.20px;top:213px;color:#000;"><span class="k" style="left:0.00px;letter-spacing:-0.606px;">48.75</span> <span class="k" style="left:30.00px;letter-spacing:-0.090px;">kbps</span></span>
<span class="t" style="left:954.10px;top:213px;color:#000;"><span class="k" style="left:0.00px;letter-spacing:-0.606px;">0.10%</span></span>
<span class="t" style="left:541.00px;top:231px;color:#000;"><span class="k" style="left:0.00px;letter-spacing:-0.677px;">770</span></span>
<span class="t" style="left:571.00px;top:231px;color:#000;"><span class="k" style="left:0.00px;letter-spacing:-0.729px;">0x0302</span></span>
<span class="t" style="left:626.50px;top:231px;color:#000;"><span class="k" style="left:0.00px;letter-spacing:-0.448px;">PMT</span></span>
<span class="t" style="left:760.50px;top:231px;color:#000;"><span class="k" style="left:0.00px;letter-spacing:-0.680px;">74</span></span>
<span class="t" style="left:817.50px;top:231px;color:#000;"><span class="k" style="left:-0.34px;">0</span></span>
<span class="t" style="left:836.20px;top:231px;color:#000;"><span class="k" style="left:0.00px;letter-spacing:-0.590px;">3.15</span> <span class="k" style="left:24.00px;letter-spacing:-0.090px;">kbps</span></span>
<span class="t" style="left:954.10px;top:231px;color:#000;"><span class="k" style="left:0.00px;letter-spacing:-0.606px;">0.01%</span></span>
<span class="t" style="left:1026.50px;top:231px;color:#000;"><span class="k" style="left:0.00px;letter-spacing:-0.229px;">AXN</span> <span class="k" style="left:27.00px;letter-spacing:-0.172px;">HD</span></span>
<span class="t" style="left:541.00px;top:249px;color:#000;"><span class="k" style="left:0.00px;letter-spacing:-0.677px;">790</span></span>
<span class="t" style="left:571.00px;top:249px;color:#000;"><span class="k" style="left:0.00px;letter-spacing:-0.729px;">0x0316</span></span>
<span class="t" style="left:626.50px;top:249px;color:#000;"><span class="k" style="left:0.00px;letter-spacing:-0.448px;">PMT</span></span>
<span class="t" style="left:760.50px;top:249px;color:#000;"><span class="k" style="left:0.00px;letter-spacing:-0.680px;">75</span></span>
<span class="t" style="left:817.50px;top:249px;color:#000;"><span class="k" style="left:-0.34px;">0</span></span>
<span class="t" style="left:836.20px;top:249px;color:#000;"><span class="k" style="left:0.00px;letter-spacing:-0.590px;">3.19</span> <span class="k" style="left:24.00px;letter-spacing:-0.090px;">kbps</span></span>
<span class="t" style="left:954.10px;top:249px;color:#000;"><span class="k" style="left:0.00px;letter-spacing:-0.606px;">0.01%</span></span>
<span class="t" style="left:1026.50px;top:249px;color:#000;"><span class="k" style="left:0.00px;letter-spacing:-0.337px;">Cinemax</span> <span class="k" style="left:48.00px;letter-spacing:-0.172px;">HD</span></span>
<span class="t" style="left:534.00px;top:267px;color:#000;"><span class="k" style="left:0.00px;letter-spacing:-0.676px;">1710</span></span>
<span class="t" style="left:570.00px;top:267px;color:#000;"><span class="k" style="left:0.00px;letter-spacing:-0.839px;">0x06AE</span></span>
<span class="t" style="left:626.50px;top:267px;color:#000;"><span class="k" style="left:0.00px;letter-spacing:-0.448px;">PMT</span></span>
<span class="t" style="left:760.50px;top:267px;color:#000;"><span class="k" style="left:0.00px;letter-spacing:-0.680px;">75</span></span>
<span class="t" style="left:817.50px;top:267px;color:#000;"><span class="k" style="left:-0.34px;">0</span></span>
<span class="t" style="left:836.20px;top:267px;color:#000;"><span class="k" style="left:0.00px;letter-spacing:-0.590px;">3.19</span> <span class="k" style="left:24.00px;letter-spacing:-0.090px;">kbps</span></span>
<span class="t" style="left:954.10px;top:267px;color:#000;"><span class="k" style="left:0.00px;letter-spacing:-0.606px;">0.01%</span></span>
<span class="t" style="left:1026.50px;top:267px;color:#000;"><span class="k" style="left:0.00px;letter-spacing:-0.668px;">DIGI</span> <span class="k" style="left:25.00px;letter-spacing:-0.138px;">Sport</span> <span class="k" style="left:56.00px;letter-spacing:-0.339px;">...</span></span>
<span class="t" style="left:534.00px;top:285px;color:#000;"><span class="k" style="left:0.00px;letter-spacing:-0.453px;">1711</span></span>
<span class="t" style="left:570.00px;top:285px;color:#000;"><span class="k" style="left:0.00px;letter-spacing:-0.727px;">0x06AF</span></span>
<span class="t" style="left:626.50px;top:285px;color:#000;"><span class="k" style="left:0.00px;letter-spacing:-0.406px;">H.264</span> <span class="k" style="left:33.00px;letter-spacing:-0.097px;">Video</span></span>
<span class="t" style="left:736.50px;top:285px;color:#000;"><span class="k" style="left:0.00px;letter-spacing:-0.674px;">216142</span></span>
<span class="t" style="left:817.50px;top:285px;color:#000;"><span class="k" style="left:-0.34px;">0</span></span>
<span class="t" style="left:836.20px;top:285px;color:#000;"><span class="k" style="left:0.00px;letter-spacing:-0.590px;">9.20</span> <span class="k" style="left:24.00px;letter-spacing:0.164px;">Mbps</span></span>
<span class="t" style="left:951.10px;top:285px;color:#0c1c1c;"><span class="k" style="left:0.00px;letter-spacing:-0.617px;">18.08%</span></span>
<span class="t" style="left:1026.50px;top:285px;color:#000;"><span class="k" style="left:0.00px;letter-spacing:-0.668px;">DIGI</span> <span class="k" style="left:25.00px;letter-spacing:-0.138px;">Sport</span> <span class="k" style="left:56.00px;letter-spacing:-0.339px;">...</span></span>
<span class="t" style="left:534.50px;top:303px;color:#000;"><span class="k" style="left:0.00px;letter-spacing:-0.676px;">1712</span></span>
<span class="t" style="left:570.50px;top:303px;color:#000;"><span class="k" style="left:0.00px;letter-spacing:-0.784px;">0x06B0</span></span>
<span class="t" style="left:626.50px;top:303px;color:#000;"><span class="k" style="left:0.00px;letter-spacing:-0.836px;">MPEG</span> <span class="k" style="left:35.00px;letter-spacing:0.259px;">Audio</span></span>
<span class="t" style="left:748.50px;top:303px;color:#000;"><span class="k" style="left:0.00px;letter-spacing:-0.676px;">6184</span></span>
<span class="t" style="left:817.50px;top:303px;color:#000;"><span class="k" style="left:-0.34px;">0</span></span>
<span class="t" style="left:836.20px;top:303px;color:#000;"><span class="k" style="left:0.00px;letter-spacing:-0.617px;">263.27</span> <span class="k" style="left:36.00px;letter-spacing:-0.090px;">kbps</span></span>
<span class="t" style="left:954.10px;top:303px;color:#000;"><span class="k" style="left:0.00px;letter-spacing:-0.606px;">0.52%</span></span>
<span class="t" style="left:1026.50px;top:303px;color:#000;"><span class="k" style="left:0.00px;letter-spacing:-0.668px;">DIGI</span> <span class="k" style="left:25.00px;letter-spacing:-0.138px;">Sport</span> <span class="k" style="left:56.00px;letter-spacing:-0.339px;">...</span></span>
<span class="t" style="left:534.50px;top:321px;color:#000;"><span class="k" style="left:0.00px;letter-spacing:-0.676px;">1713</span></span>
<span class="t" style="left:570.50px;top:321px;color:#000;"><span class="k" style="left:0.00px;letter-spacing:-0.784px;">0x06B1</span></span>
<span class="t" style="left:626.50px;top:321px;color:#000;"><span class="k" style="left:0.00px;letter-spacing:-0.836px;">MPEG</span> <span class="k" style="left:35.00px;letter-spacing:0.259px;">Audio</span></span>
<span class="t" style="left:748.50px;top:321px;color:#000;"><span class="k" style="left:0.00px;letter-spacing:-0.676px;">6184</span></span>
<span class="t" style="left:817.50px;top:321px;color:#000;"><span class="k" style="left:-0.34px;">0</span></span>
<span class="t" style="left:836.20px;top:321px;color:#000;"><span class="k" style="left:0.00px;letter-spacing:-0.617px;">263.27</span> <span class="k" style="left:36.00px;letter-spacing:-0.090px;">kbps</span></span>
<span class="t" style="left:954.10px;top:321px;color:#000;"><span class="k" style="left:0.00px;letter-spacing:-0.606px;">0.52%</span></span>
<span class="t" style="left:1026.50px;top:321px;color:#000;"><span class="k" style="left:0.00px;letter-spacing:-0.668px;">DIGI</span> <span class="k" style="left:25.00px;letter-spacing:-0.138px;">Sport</span> <span class="k" style="left:56.00px;letter-spacing:-0.339px;">...</span></span>
<span class="t" style="left:534.50px;top:339px;color:#000;"><span class="k" style="left:0.00px;letter-spacing:-0.453px;">3611</span></span>
<span class="t" style="left:570.50px;top:339px;color:#000;"><span class="k" style="left:0.00px;letter-spacing:-1.005px;">0x0E1B</span></span>
<span class="t" style="left:626.50px;top:339px;color:#000;"><span class="k" style="left:0.00px;letter-spacing:-0.406px;">H.264</span> <span class="k" style="left:33.00px;letter-spacing:-0.097px;">Video</span></span>
<span class="t" style="left:736.50px;top:339px;color:#000;"><span class="k" style="left:0.00px;letter-spacing:-0.674px;">258444</span></span>
<span class="t" style="left:817.50px;top:339px;color:#000;"><span class="k" style="left:-0.34px;">0</span></span>
<span class="t" style="left:836.20px;top:339px;color:#000;"><span class="k" style="left:0.00px;letter-spacing:-0.428px;">11.00</span> <span class="k" style="left:30.00px;letter-spacing:0.164px;">Mbps</span></span>
<span class="t" style="left:951.10px;top:339px;color:#0c1c1c;"><span class="k" style="left:0.00px;letter-spacing:-0.617px;">21.62%</span></span>
<span class="t" style="left:1026.50px;top:339px;color:#000;"><span class="k" style="left:0.00px;letter-spacing:-0.229px;">AXN</span> <span class="k" style="left:27.00px;letter-spacing:-0.172px;">HD</span></span>
<span class="t" style="left:534.00px;top:357px;color:#000;"><span class="k" style="left:0.00px;letter-spacing:-0.676px;">3612</span></span>
<span class="t" style="left:570.00px;top:357px;color:#000;"><span class="k" style="left:0.00px;letter-spacing:-0.951px;">0x0E1C</span></span>
<span class="t" style="left:626.50px;top:357px;color:#000;"><span class="k" style="left:0.00px;letter-spacing:-0.836px;">MPEG</span> <span class="k" style="left:35.00px;letter-spacing:0.259px;">Audio</span></span>
<span class="t" style="left:748.50px;top:357px;color:#000;"><span class="k" style="left:0.00px;letter-spacing:-0.676px;">4662</span></span>
<span class="t" style="left:817.50px;top:357px;color:#000;"><span class="k" style="left:-0.34px;">0</span></span>
<span class="t" style="left:836.20px;top:357px;color:#000;"><span class="k" style="left:0.00px;letter-spacing:-0.617px;">198.47</span> <span class="k" style="left:36.00px;letter-spacing:-0.090px;">kbps</span></span>
<span class="t" style="left:954.10px;top:357px;color:#000;"><span class="k" style="left:0.00px;letter-spacing:-0.606px;">0.39%</span></span>
<span class="t" style="left:1026.50px;top:357px;color:#000;"><span class="k" style="left:0.00px;letter-spacing:-0.229px;">AXN</span> <span class="k" style="left:27.00px;letter-spacing:-0.172px;">HD</span></span>
<span class="t" style="left:534.00px;top:375px;color:#000;"><span class="k" style="left:0.00px;letter-spacing:-0.676px;">3613</span></span>
<span class="t" style="left:570.00px;top:375px;color:#000;"><span class="k" style="left:0.00px;letter-spacing:-0.951px;">0x0E1D</span></span>
<span class="t" style="left:626.50px;top:375px;color:#000;"><span class="k" style="left:0.00px;letter-spacing:-0.836px;">MPEG</span> <span class="k" style="left:35.00px;letter-spacing:0.259px;">Audio</span></span>
<span class="t" style="left:748.50px;top:375px;color:#000;"><span class="k" style="left:0.00px;letter-spacing:-0.676px;">3190</span></span>
<span class="t" style="left:817.50px;top:375px;color:#000;"><span class="k" style="left:-0.34px;">0</span></span>
<span class="t" style="left:836.20px;top:375px;color:#000;"><span class="k" style="left:0.00px;letter-spacing:-0.617px;">135.81</span> <span class="k" style="left:36.00px;letter-spacing:-0.090px;">kbps</span></span>
<span class="t" style="left:954.10px;top:375px;color:#000;"><span class="k" style="left:0.00px;letter-spacing:-0.606px;">0.27%</span></span>
<span class="t" style="left:1026.50px;top:375px;color:#000;"><span class="k" style="left:0.00px;letter-spacing:-0.229px;">AXN</span> <span class="k" style="left:27.00px;letter-spacing:-0.172px;">HD</span></span>
<span class="t" style="left:535.00px;top:393px;color:#000;"><span class="k" style="left:0.00px;letter-spacing:-0.676px;">3614</span></span>
<span class="t" style="left:571.00px;top:393px;color:#000;"><span class="k" style="left:0.00px;letter-spacing:-1.172px;">0x0E1E</span></span>
<span class="t" style="left:626.50px;top:393px;color:#000;"><span class="k" style="left:0.00px;letter-spacing:-0.448px;">AC3</span> <span class="k" style="left:25.00px;letter-spacing:0.259px;">Audio</span></span>
<span class="t" style="left:748.50px;top:393px;color:#000;"><span class="k" style="left:0.00px;letter-spacing:-0.676px;">4638</span></span>
<span class="t" style="left:817.50px;top:393px;color:#000;"><span class="k" style="left:-0.34px;">0</span></span>
<span class="t" style="left:836.20px;top:393px;color:#000;"><span class="k" style="left:0.00px;letter-spacing:-0.617px;">197.45</span> <span class="k" style="left:36.00px;letter-spacing:-0.090px;">kbps</span></span>
<span class="t" style="left:954.10px;top:393px;color:#000;"><span class="k" style="left:0.00px;letter-spacing:-0.606px;">0.39%</span></span>
<span class="t" style="left:1026.50px;top:393px;color:#000;"><span class="k" style="left:0.00px;letter-spacing:-0.229px;">AXN</span> <span class="k" style="left:27.00px;letter-spacing:-0.172px;">HD</span></span>
<span class="t" style="left:535.00px;top:411px;color:#000;"><span class="k" style="left:0.00px;letter-spacing:-0.676px;">3615</span></span>
<span class="t" style="left:571.00px;top:411px;color:#000;"><span class="k" style="left:0.00px;letter-spacing:-1.060px;">0x0E1F</span></span>
<span class="t" style="left:626.50px;top:411px;color:#000;"><span class="k" style="left:0.00px;letter-spacing:-0.448px;">AC3</span> <span class="k" style="left:25.00px;letter-spacing:0.259px;">Audio</span></span>
<span class="t" style="left:748.50px;top:411px;color:#000;"><span class="k" style="left:0.00px;letter-spacing:-0.676px;">4637</span></span>
<span class="t" style="left:817.50px;top:411px;color:#000;"><span class="k" style="left:-0.34px;">0</span></span>
<span class="t" style="left:836.20px;top:411px;color:#000;"><span class="k" style="left:0.00px;letter-spacing:-0.617px;">197.41</span> <span class="k" style="left:36.00px;letter-spacing:-0.090px;">kbps</span></span>
<span class="t" style="left:954.10px;top:411px;color:#000;"><span class="k" style="left:0.00px;letter-spacing:-0.606px;">0.39%</span></span>
<span class="t" style="left:1026.50px;top:411px;color:#000;"><span class="k" style="left:0.00px;letter-spacing:-0.229px;">AXN</span> <span class="k" style="left:27.00px;letter-spacing:-0.172px;">HD</span></span>
<span class="t" style="left:535.00px;top:429px;color:#000;"><span class="k" style="left:0.00px;letter-spacing:-0.676px;">3720</span></span>
<span class="t" style="left:571.00px;top:429px;color:#000;"><span class="k" style="left:0.00px;letter-spacing:-0.951px;">0x0E88</span></span>
<span class="t" style="left:626.50px;top:429px;color:#000;"><span class="k" style="left:0.00px;letter-spacing:-0.448px;">PMT</span></span>
<span class="t" style="left:760.50px;top:429px;color:#000;"><span class="k" style="left:0.00px;letter-spacing:-0.680px;">74</span></span>
<span class="t" style="left:817.50px;top:429px;color:#000;"><span class="k" style="left:-0.34px;">0</span></span>
<span class="t" style="left:836.20px;top:429px;color:#000;"><span class="k" style="left:0.00px;letter-spacing:-0.590px;">3.15</span> <span class="k" style="left:24.00px;letter-spacing:-0.090px;">kbps</span></span>
<span class="t" style="left:954.10px;top:429px;color:#000;"><span class="k" style="left:0.00px;letter-spacing:-0.606px;">0.01%</span></span>
<span class="t" style="left:1026.50px;top:429px;color:#000;"><span class="k" style="left:0.00px;letter-spacing:-0.229px;">AXN</span> <span class="k" style="left:27.00px;letter-spacing:-0.258px;">Spin</span></span>
<span class="t" style="left:535.00px;top:447px;color:#000;"><span class="k" style="left:0.00px;letter-spacing:-0.676px;">3721</span></span>
<span class="t" style="left:571.00px;top:447px;color:#000;"><span class="k" style="left:0.00px;letter-spacing:-0.951px;">0x0E89</span></span>
<span class="t" style="left:626.50px;top:447px;color:#000;"><span class="k" style="left:0.00px;letter-spacing:-0.803px;">MPEG2</span> <span class="k" style="left:41.00px;letter-spacing:-0.097px;">Video</span></span>
<span class="t" style="left:742.50px;top:447px;color:#000;"><span class="k" style="left:0.00px;letter-spacing:-0.675px;">51731</span></span>
<span class="t" style="left:817.50px;top:447px;color:#000;"><span class="k" style="left:-0.34px;">0</span></span>
<span class="t" style="left:836.20px;top:447px;color:#000;"><span class="k" style="left:0.00px;letter-spacing:-0.590px;">2.20</span> <span class="k" style="left:24.00px;letter-spacing:0.164px;">Mbps</span></span>
<span class="t" style="left:954.10px;top:447px;color:#000;"><span class="k" style="left:0.00px;letter-spacing:-0.606px;">4.33%</span></span>
<span class="t" style="left:1026.50px;top:447px;color:#000;"><span class="k" style="left:0.00px;letter-spacing:-0.229px;">AXN</span> <span class="k" style="left:27.00px;letter-spacing:-0.258px;">Spin</span></span>
<span class="t" style="left:534.00px;top:465px;color:#000;"><span class="k" style="left:0.00px;letter-spacing:-0.676px;">3722</span></span>
<span class="t" style="left:570.00px;top:465px;color:#000;"><span class="k" style="left:0.00px;letter-spacing:-0.839px;">0x0E8A</span></span>
<span class="t" style="left:626.50px;top:465px;color:#000;"><span class="k" style="left:0.00px;letter-spacing:-0.836px;">MPEG</span> <span class="k" style="left:35.00px;letter-spacing:0.259px;">Audio</span></span>
<span class="t" style="left:748.50px;top:465px;color:#000;"><span class="k" style="left:0.00px;letter-spacing:-0.676px;">4627</span></span>
<span class="t" style="left:817.50px;top:465px;color:#000;"><span class="k" style="left:-0.34px;">0</span></span>
<span class="t" style="left:836.20px;top:465px;color:#000;"><span class="k" style="left:0.00px;letter-spacing:-0.617px;">196.98</span> <span class="k" style="left:36.00px;letter-spacing:-0.090px;">kbps</span></span>
<span class="t" style="left:954.10px;top:465px;color:#000;"><span class="k" style="left:0.00px;letter-spacing:-0.606px;">0.39%</span></span>
<span class="t" style="left:1026.50px;top:465px;color:#000;"><span class="k" style="left:0.00px;letter-spacing:-0.229px;">AXN</span> <span class="k" style="left:27.00px;letter-spacing:-0.258px;">Spin</span></span>
<span class="t" style="left:534.50px;top:483px;color:#000;"><span class="k" style="left:0.00px;letter-spacing:-0.676px;">3723</span></span>
<span class="t" style="left:570.50px;top:483px;color:#000;"><span class="k" style="left:0.00px;letter-spacing:-1.005px;">0x0E8B</span></span>
<span class="t" style="left:626.50px;top:483px;color:#000;"><span class="k" style="left:0.00px;letter-spacing:-0.836px;">MPEG</span> <span class="k" style="left:35.00px;letter-spacing:0.259px;">Audio</span></span>
<span class="t" style="left:748.50px;top:483px;color:#000;"><span class="k" style="left:0.00px;letter-spacing:-0.676px;">3437</span></span>
<span class="t" style="left:817.50px;top:483px;color:#000;"><span class="k" style="left:-0.34px;">0</span></span>
<span class="t" style="left:836.20px;top:483px;color:#000;"><span class="k" style="left:0.00px;letter-spacing:-0.617px;">146.32</span> <span class="k" style="left:36.00px;letter-spacing:-0.090px;">kbps</span></span>
<span class="t" style="left:954.10px;top:483px;color:#000;"><span class="k" style="left:0.00px;letter-spacing:-0.606px;">0.29%</span></span>
<span class="t" style="left:1026.50px;top:483px;color:#000;"><span class="k" style="left:0.00px;letter-spacing:-0.229px;">AXN</span> <span class="k" style="left:27.00px;letter-spacing:-0.258px;">Spin</span></span>
<span class="t" style="left:535.00px;top:501px;color:#000;"><span class="k" style="left:0.00px;letter-spacing:-0.676px;">3726</span></span>
<span class="t" style="left:571.00px;top:501px;color:#000;"><span class="k" style="left:0.00px;letter-spacing:-1.172px;">0x0E8E</span></span>
<span class="t" style="left:626.50px;top:501px;color:#000;"><span class="k" style="left:0.00px;letter-spacing:-0.896px;">DVB</span> <span class="k" style="left:25.00px;letter-spacing:-0.115px;">Subtitles</span></span>
<span class="t" style="left:754.50px;top:501px;color:#000;"><span class="k" style="left:0.00px;letter-spacing:-0.677px;">204</span></span>
<span class="t" style="left:817.50px;top:501px;color:#000;"><span class="k" style="left:-0.34px;">0</span></span>
<span class="t" style="left:836.20px;top:501px;color:#000;"><span class="k" style="left:0.00px;letter-spacing:-0.590px;">8.68</span> <span class="k" style="left:24.00px;letter-spacing:-0.090px;">kbps</span></span>
<span class="t" style="left:954.10px;top:501px;color:#000;"><span class="k" style="left:0.00px;letter-spacing:-0.606px;">0.02%</span></span>
<span class="t" style="left:1026.50px;top:501px;color:#000;"><span class="k" style="left:0.00px;letter-spacing:-0.229px;">AXN</span> <span class="k" style="left:27.00px;letter-spacing:-0.258px;">Spin</span></span>
<span class="t" style="left:534.00px;top:519px;color:#000;"><span class="k" style="left:0.00px;letter-spacing:-0.676px;">5420</span></span>
<span class="t" style="left:570.00px;top:519px;color:#000;"><span class="k" style="left:0.00px;letter-spacing:-0.729px;">0x152C</span></span>
<span class="t" style="left:626.50px;top:519px;color:#000;"><span class="k" style="left:0.00px;letter-spacing:-0.448px;">PMT</span></span>
<span class="t" style="left:760.50px;top:519px;color:#000;"><span class="k" style="left:0.00px;letter-spacing:-0.680px;">74</span></span>
<span class="t" style="left:817.50px;top:519px;color:#000;"><span class="k" style="left:-0.34px;">0</span></span>
<span class="t" style="left:836.20px;top:519px;color:#000;"><span class="k" style="left:0.00px;letter-spacing:-0.590px;">3.15</span> <span class="k" style="left:24.00px;letter-spacing:-0.090px;">kbps</span></span>
<span class="t" style="left:954.10px;top:519px;color:#000;"><span class="k" style="left:0.00px;letter-spacing:-0.606px;">0.01%</span></span>
<span class="t" style="left:1026.50px;top:519px;color:#000;"><span class="k" style="left:0.00px;letter-spacing:-0.422px;">HBO3</span> <span class="k" style="left:34.00px;letter-spacing:-0.172px;">HD</span></span>
<span class="t" style="left:535.00px;top:537px;color:#000;"><span class="k" style="left:0.00px;letter-spacing:-0.676px;">5527</span></span>
<span class="t" style="left:571.00px;top:537px;color:#000;"><span class="k" style="left:0.00px;letter-spacing:-0.729px;">0x1597</span></span>
<span class="t" style="left:626.50px;top:537px;color:#000;"><span class="k" style="left:0.00px;letter-spacing:0.000px;">ECM/EMM</span></span>
<span class="t" style="left:754.50px;top:537px;color:#000;"><span class="k" style="left:0.00px;letter-spacing:-0.677px;">351</span></span>
<span class="t" style="left:817.50px;top:537px;color:#000;"><span class="k" style="left:-0.34px;">0</span></span>
<span class="t" style="left:836.20px;top:537px;color:#000;"><span class="k" style="left:0.00px;letter-spacing:-0.606px;">14.94</span> <span class="k" style="left:30.00px;letter-spacing:-0.090px;">kbps</span></span>
<span class="t" style="left:954.10px;top:537px;color:#000;"><span class="k" style="left:0.00px;letter-spacing:-0.606px;">0.03%</span></span>
<span class="t" style="left:1026.50px;top:537px;color:#000;"><span class="k" style="left:0.00px;letter-spacing:-0.422px;">HBO3</span> <span class="k" style="left:34.00px;letter-spacing:-0.172px;">HD</span></span>
<span class="t" style="left:535.00px;top:555px;color:#000;"><span class="k" style="left:0.00px;letter-spacing:-0.676px;">5528</span></span>
<span class="t" style="left:571.00px;top:555px;color:#000;"><span class="k" style="left:0.00px;letter-spacing:-0.729px;">0x1598</span></span>
<span class="t" style="left:626.50px;top:555px;color:#000;"><span class="k" style="left:0.00px;letter-spacing:0.000px;">ECM/EMM</span></span>
<span class="t" style="left:754.50px;top:555px;color:#000;"><span class="k" style="left:0.00px;letter-spacing:-0.677px;">349</span></span>
<span class="t" style="left:817.50px;top:555px;color:#000;"><span class="k" style="left:-0.34px;">0</span></span>
<span class="t" style="left:836.20px;top:555px;color:#000;"><span class="k" style="left:0.00px;letter-spacing:-0.606px;">14.86</span> <span class="k" style="left:30.00px;letter-spacing:-0.090px;">kbps</span></span>
<span class="t" style="left:954.10px;top:555px;color:#000;"><span class="k" style="left:0.00px;letter-spacing:-0.606px;">0.03%</span></span>
<span class="t" style="left:1026.50px;top:555px;color:#000;"><span class="k" style="left:0.00px;letter-spacing:-0.337px;">Cinemax</span> <span class="k" style="left:48.00px;letter-spacing:-0.172px;">HD</span></span>
<span class="t" style="left:534.00px;top:573px;color:#000;"><span class="k" style="left:0.00px;letter-spacing:-0.676px;">5577</span></span>
<span class="t" style="left:570.00px;top:573px;color:#000;"><span class="k" style="left:0.00px;letter-spacing:-0.729px;">0x15C9</span></span>
<span class="t" style="left:626.50px;top:573px;color:#000;"><span class="k" style="left:0.00px;letter-spacing:0.000px;">ECM/EMM</span></span>
<span class="t" style="left:754.50px;top:573px;color:#000;"><span class="k" style="left:0.00px;letter-spacing:-0.677px;">351</span></span>
<span class="t" style="left:817.50px;top:573px;color:#000;"><span class="k" style="left:-0.34px;">0</span></span>
<span class="t" style="left:836.20px;top:573px;color:#000;"><span class="k" style="left:0.00px;letter-spacing:-0.606px;">14.94</span> <span class="k" style="left:30.00px;letter-spacing:-0.090px;">kbps</span></span>
<span class="t" style="left:954.10px;top:573px;color:#000;"><span class="k" style="left:0.00px;letter-spacing:-0.606px;">0.03%</span></span>
<span class="t" style="left:1026.50px;top:573px;color:#000;"><span class="k" style="left:0.00px;letter-spacing:-0.422px;">HBO3</span> <span class="k" style="left:34.00px;letter-spacing:-0.172px;">HD</span></span>
<span class="t" style="left:533.00px;top:591px;color:#000;"><span class="k" style="left:0.00px;letter-spacing:-0.676px;">5578</span></span>
<span class="t" style="left:569.00px;top:591px;color:#000;"><span class="k" style="left:0.00px;letter-spacing:-0.617px;">0x15CA</span></span>
<span class="t" style="left:626.50px;top:591px;color:#000;"><span class="k" style="left:0.00px;letter-spacing:0.000px;">ECM/EMM</span></span>
<span class="t" style="left:754.50px;top:591px;color:#000;"><span class="k" style="left:0.00px;letter-spacing:-0.677px;">349</span></span>
<span class="t" style="left:817.50px;top:591px;color:#000;"><span class="k" style="left:-0.34px;">0</span></span>
<span class="t" style="left:836.20px;top:591px;color:#000;"><span class="k" style="left:0.00px;letter-spacing:-0.606px;">14.86</span> <span class="k" style="left:30.00px;letter-spacing:-0.090px;">kbps</span></span>
<span class="t" style="left:954.10px;top:591px;color:#000;"><span class="k" style="left:0.00px;letter-spacing:-0.606px;">0.03%</span></span>
<span class="t" style="left:1026.50px;top:591px;color:#000;"><span class="k" style="left:0.00px;letter-spacing:-0.337px;">Cinemax</span> <span class="k" style="left:48.00px;letter-spacing:-0.172px;">HD</span></span>
<span class="t" style="left:534.50px;top:609px;color:#000;"><span class="k" style="left:0.00px;letter-spacing:-0.676px;">5627</span></span>
<span class="t" style="left:570.50px;top:609px;color:#000;"><span class="k" style="left:0.00px;letter-spacing:-0.893px;">0x15FB</span></span>
<span class="t" style="left:626.50px;top:609px;color:#000;"><span class="k" style="left:0.00px;letter-spacing:0.000px;">ECM/EMM</span></span>
<span class="t" style="left:754.50px;top:609px;color:#000;"><span class="k" style="left:0.00px;letter-spacing:-0.677px;">232</span></span>
<span class="t" style="left:817.50px;top:609px;color:#000;"><span class="k" style="left:-0.34px;">0</span></span>
<span class="t" style="left:836.20px;top:609px;color:#000;"><span class="k" style="left:0.00px;letter-spacing:-0.590px;">9.88</span> <span class="k" style="left:24.00px;letter-spacing:-0.090px;">kbps</span></span>
<span class="t" style="left:954.10px;top:609px;color:#000;"><span class="k" style="left:0.00px;letter-spacing:-0.606px;">0.02%</span></span>
<span class="t" style="left:1026.50px;top:609px;color:#000;"><span class="k" style="left:0.00px;letter-spacing:-0.422px;">HBO3</span> <span class="k" style="left:34.00px;letter-spacing:-0.172px;">HD</span></span>
<span class="t" style="left:534.00px;top:627px;color:#000;"><span class="k" style="left:0.00px;letter-spacing:-0.676px;">5628</span></span>
<span class="t" style="left:570.00px;top:627px;color:#000;"><span class="k" style="left:0.00px;letter-spacing:-0.839px;">0x15FC</span></span>
<span class="t" style="left:626.50px;top:627px;color:#000;"><span class="k" style="left:0.00px;letter-spacing:0.000px;">ECM/EMM</span></span>
<span class="t" style="left:754.50px;top:627px;color:#000;"><span class="k" style="left:0.00px;letter-spacing:-0.677px;">234</span></span>
<span class="t" style="left:817.50px;top:627px;color:#000;"><span class="k" style="left:-0.34px;">0</span></span>
<span class="t" style="left:836.20px;top:627px;color:#000;"><span class="k" style="left:0.00px;letter-spacing:-0.590px;">9.96</span> <span class="k" style="left:24.00px;letter-spacing:-0.090px;">kbps</span></span>
<span class="t" style="left:954.10px;top:627px;color:#000;"><span class="k" style="left:0.00px;letter-spacing:-0.606px;">0.02%</span></span>
<span class="t" style="left:1026.50px;top:627px;color:#000;"><span class="k" style="left:0.00px;letter-spacing:-0.337px;">Cinemax</span> <span class="k" style="left:48.00px;letter-spacing:-0.172px;">HD</span></span>
<span class="t" style="left:534.00px;top:645px;color:#d21c1c;"><span class="k" style="left:0.00px;letter-spacing:-0.453px;">6611</span></span>
<span class="t" style="left:570.00px;top:645px;color:#d21c1c;"><span class="k" style="left:0.00px;letter-spacing:-0.729px;">0x19D3</span></span>
<span class="t" style="left:626.50px;top:645px;color:#d21c1c;"><span class="k" style="left:0.00px;letter-spacing:-0.406px;">H.264</span> <span class="k" style="left:33.00px;letter-spacing:-0.097px;">Video</span></span>
<span class="t" style="left:736.50px;top:645px;color:#d21c1c;"><span class="k" style="left:0.00px;letter-spacing:-0.674px;">199577</span></span>
<span class="t" style="left:817.50px;top:645px;color:#d21c1c;"><span class="k" style="left:-0.34px;">0</span></span>
<span class="t" style="left:836.20px;top:645px;color:#d21c1c;"><span class="k" style="left:0.00px;letter-spacing:-0.590px;">8.50</span> <span class="k" style="left:24.00px;letter-spacing:0.164px;">Mbps</span></span>
<span class="t" style="left:951.10px;top:645px;color:#0c1c1c;"><span class="k" style="left:0.00px;letter-spacing:-0.617px;">16.70%</span></span>
<span class="t" style="left:1026.50px;top:645px;color:#d21c1c;"><span class="k" style="left:0.00px;letter-spacing:-0.422px;">HBO3</span> <span class="k" style="left:34.00px;letter-spacing:-0.172px;">HD</span></span>
<span class="t" style="left:534.00px;top:663px;color:#d21c1c;"><span class="k" style="left:0.00px;letter-spacing:-0.676px;">6612</span></span>
<span class="t" style="left:570.00px;top:663px;color:#d21c1c;"><span class="k" style="left:0.00px;letter-spacing:-0.729px;">0x19D4</span></span>
<span class="t" style="left:626.50px;top:663px;color:#d21c1c;"><span class="k" style="left:0.00px;letter-spacing:-0.836px;">MPEG</span> <span class="k" style="left:35.00px;letter-spacing:0.259px;">Audio</span></span>
<span class="t" style="left:748.50px;top:663px;color:#d21c1c;"><span class="k" style="left:0.00px;letter-spacing:-0.676px;">4785</span></span>
<span class="t" style="left:817.50px;top:663px;color:#d21c1c;"><span class="k" style="left:-0.34px;">0</span></span>
<span class="t" style="left:836.20px;top:663px;color:#d21c1c;"><span class="k" style="left:0.00px;letter-spacing:-0.617px;">203.71</span> <span class="k" style="left:36.00px;letter-spacing:-0.090px;">kbps</span></span>
<span class="t" style="left:954.10px;top:663px;color:#d21c1c;"><span class="k" style="left:0.00px;letter-spacing:-0.606px;">0.40%</span></span>
<span class="t" style="left:1026.50px;top:663px;color:#d21c1c;"><span class="k" style="left:0.00px;letter-spacing:-0.422px;">HBO3</span> <span class="k" style="left:34.00px;letter-spacing:-0.172px;">HD</span></span>
<span class="t" style="left:534.00px;top:681px;color:#d21c1c;"><span class="k" style="left:0.00px;letter-spacing:-0.676px;">6613</span></span>
<span class="t" style="left:570.00px;top:681px;color:#d21c1c;"><span class="k" style="left:0.00px;letter-spacing:-0.729px;">0x19D5</span></span>
<span class="t" style="left:626.50px;top:681px;color:#d21c1c;"><span class="k" style="left:0.00px;letter-spacing:-0.836px;">MPEG</span> <span class="k" style="left:35.00px;letter-spacing:0.259px;">Audio</span></span>
<span class="t" style="left:748.50px;top:681px;color:#d21c1c;"><span class="k" style="left:0.00px;letter-spacing:-0.676px;">4785</span></span>
<span class="t" style="left:817.50px;top:681px;color:#d21c1c;"><span class="k" style="left:-0.34px;">0</span></span>
<span class="t" style="left:836.20px;top:681px;color:#d21c1c;"><span class="k" style="left:0.00px;letter-spacing:-0.617px;">203.71</span> <span class="k" style="left:36.00px;letter-spacing:-0.090px;">kbps</span></span>
<span class="t" style="left:954.10px;top:681px;color:#d21c1c;"><span class="k" style="left:0.00px;letter-spacing:-0.606px;">0.40%</span></span>
<span class="t" style="left:1026.50px;top:681px;color:#d21c1c;"><span class="k" style="left:0.00px;letter-spacing:-0.422px;">HBO3</span> <span class="k" style="left:34.00px;letter-spacing:-0.172px;">HD</span></span>
<span class="t" style="left:534.00px;top:699px;color:#d21c1c;"><span class="k" style="left:0.00px;letter-spacing:-0.676px;">6614</span></span>
<span class="t" style="left:570.00px;top:699px;color:#d21c1c;"><span class="k" style="left:0.00px;letter-spacing:-0.729px;">0x19D6</span></span>
<span class="t" style="left:626.50px;top:699px;color:#d21c1c;"><span class="k" style="left:0.00px;letter-spacing:-0.448px;">AC3</span> <span class="k" style="left:25.00px;letter-spacing:0.259px;">Audio</span></span>
<span class="t" style="left:748.50px;top:699px;color:#d21c1c;"><span class="k" style="left:0.00px;letter-spacing:-0.676px;">9387</span></span>
<span class="t" style="left:817.50px;top:699px;color:#d21c1c;"><span class="k" style="left:-0.34px;">0</span></span>
<span class="t" style="left:836.20px;top:699px;color:#d21c1c;"><span class="k" style="left:0.00px;letter-spacing:-0.617px;">399.63</span> <span class="k" style="left:36.00px;letter-spacing:-0.090px;">kbps</span></span>
<span class="t" style="left:954.10px;top:699px;color:#d21c1c;"><span class="k" style="left:0.00px;letter-spacing:-0.606px;">0.79%</span></span>
<span class="t" style="left:1026.50px;top:699px;color:#d21c1c;"><span class="k" style="left:0.00px;letter-spacing:-0.422px;">HBO3</span> <span class="k" style="left:34.00px;letter-spacing:-0.172px;">HD</span></span>
<span class="t" style="left:534.00px;top:717px;color:#d21c1c;"><span class="k" style="left:0.00px;letter-spacing:-0.453px;">6711</span></span>
<span class="t" style="left:570.00px;top:717px;color:#d21c1c;"><span class="k" style="left:0.00px;letter-spacing:-0.617px;">0x1A37</span></span>
<span class="t" style="left:626.50px;top:717px;color:#d21c1c;"><span class="k" style="left:0.00px;letter-spacing:-0.406px;">H.264</span> <span class="k" style="left:33.00px;letter-spacing:-0.097px;">Video</span></span>
<span class="t" style="left:736.50px;top:717px;color:#d21c1c;"><span class="k" style="left:0.00px;letter-spacing:-0.674px;">199591</span></span>
<span class="t" style="left:817.50px;top:717px;color:#d21c1c;"><span class="k" style="left:-0.34px;">0</span></span>
<span class="t" style="left:836.20px;top:717px;color:#d21c1c;"><span class="k" style="left:0.00px;letter-spacing:-0.590px;">8.50</span> <span class="k" style="left:24.00px;letter-spacing:0.164px;">Mbps</span></span>
<span class="t" style="left:951.10px;top:717px;color:#0c1c1c;"><span class="k" style="left:0.00px;letter-spacing:-0.617px;">16.70%</span></span>
<span class="t" style="left:1026.50px;top:717px;color:#d21c1c;"><span class="k" style="left:0.00px;letter-spacing:-0.337px;">Cinemax</span> <span class="k" style="left:48.00px;letter-spacing:-0.172px;">HD</span></span>
<span class="t" style="left:534.00px;top:735px;color:#d21c1c;"><span class="k" style="left:0.00px;letter-spacing:-0.676px;">6712</span></span>
<span class="t" style="left:570.00px;top:735px;color:#d21c1c;"><span class="k" style="left:0.00px;letter-spacing:-0.617px;">0x1A38</span></span>
<span class="t" style="left:626.50px;top:735px;color:#d21c1c;"><span class="k" style="left:0.00px;letter-spacing:-0.836px;">MPEG</span> <span class="k" style="left:35.00px;letter-spacing:0.259px;">Audio</span></span>
<span class="t" style="left:748.50px;top:735px;color:#d21c1c;"><span class="k" style="left:0.00px;letter-spacing:-0.676px;">4785</span></span>
<span class="t" style="left:817.50px;top:735px;color:#d21c1c;"><span class="k" style="left:-0.34px;">0</span></span>
<span class="t" style="left:836.20px;top:735px;color:#d21c1c;"><span class="k" style="left:0.00px;letter-spacing:-0.617px;">203.71</span> <span class="k" style="left:36.00px;letter-spacing:-0.090px;">kbps</span></span>
<span class="t" style="left:954.10px;top:735px;color:#d21c1c;"><span class="k" style="left:0.00px;letter-spacing:-0.606px;">0.40%</span></span>
<span class="t" style="left:1026.50px;top:735px;color:#d21c1c;"><span class="k" style="left:0.00px;letter-spacing:-0.337px;">Cinemax</span> <span class="k" style="left:48.00px;letter-spacing:-0.172px;">HD</span></span>
<span class="t" style="left:534.00px;top:753px;color:#d21c1c;"><span class="k" style="left:0.00px;letter-spacing:-0.676px;">6713</span></span>
<span class="t" style="left:570.00px;top:753px;color:#d21c1c;"><span class="k" style="left:0.00px;letter-spacing:-0.617px;">0x1A39</span></span>
<span class="t" style="left:626.50px;top:753px;color:#d21c1c;"><span class="k" style="left:0.00px;letter-spacing:-0.836px;">MPEG</span> <span class="k" style="left:35.00px;letter-spacing:0.259px;">Audio</span></span>
<span class="t" style="left:748.50px;top:753px;color:#d21c1c;"><span class="k" style="left:0.00px;letter-spacing:-0.676px;">4785</span></span>
<span class="t" style="left:817.50px;top:753px;color:#d21c1c;"><span class="k" style="left:-0.34px;">0</span></span>
<span class="t" style="left:836.20px;top:753px;color:#d21c1c;"><span class="k" style="left:0.00px;letter-spacing:-0.617px;">203.71</span> <span class="k" style="left:36.00px;letter-spacing:-0.090px;">kbps</span></span>
<span class="t" style="left:954.10px;top:753px;color:#d21c1c;"><span class="k" style="left:0.00px;letter-spacing:-0.606px;">0.40%</span></span>
<span class="t" style="left:1026.50px;top:753px;color:#d21c1c;"><span class="k" style="left:0.00px;letter-spacing:-0.337px;">Cinemax</span> <span class="k" style="left:48.00px;letter-spacing:-0.172px;">HD</span></span>
<span class="t" style="left:533.00px;top:771px;color:#d21c1c;"><span class="k" style="left:0.00px;letter-spacing:-0.676px;">6714</span></span>
<span class="t" style="left:569.00px;top:771px;color:#d21c1c;"><span class="k" style="left:0.00px;letter-spacing:-0.505px;">0x1A3A</span></span>
<span class="t" style="left:626.50px;top:771px;color:#d21c1c;"><span class="k" style="left:0.00px;letter-spacing:-0.836px;">MPEG</span> <span class="k" style="left:35.00px;letter-spacing:0.259px;">Audio</span></span>
<span class="t" style="left:748.50px;top:771px;color:#d21c1c;"><span class="k" style="left:0.00px;letter-spacing:-0.676px;">4785</span></span>
<span class="t" style="left:817.50px;top:771px;color:#d21c1c;"><span class="k" style="left:-0.34px;">0</span></span>
<span class="t" style="left:836.20px;top:771px;color:#d21c1c;"><span class="k" style="left:0.00px;letter-spacing:-0.617px;">203.71</span> <span class="k" style="left:36.00px;letter-spacing:-0.090px;">kbps</span></span>
<span class="t" style="left:954.10px;top:771px;color:#d21c1c;"><span class="k" style="left:0.00px;letter-spacing:-0.606px;">0.40%</span></span>
<span class="t" style="left:1026.50px;top:771px;color:#d21c1c;"><span class="k" style="left:0.00px;letter-spacing:-0.337px;">Cinemax</span> <span class="k" style="left:48.00px;letter-spacing:-0.172px;">HD</span></span>
<span class="t" style="left:533.00px;top:789px;color:#000;"><span class="k" style="left:0.00px;letter-spacing:-0.676px;">6716</span></span>
<span class="t" style="left:569.00px;top:789px;color:#000;"><span class="k" style="left:0.00px;letter-spacing:-0.617px;">0x1A3C</span></span>
<span class="t" style="left:626.50px;top:789px;color:#000;"><span class="k" style="left:0.00px;letter-spacing:-0.896px;">DVB</span> <span class="k" style="left:25.00px;letter-spacing:-0.115px;">Subtitles</span></span>
<span class="t" style="left:754.50px;top:789px;color:#000;"><span class="k" style="left:0.00px;letter-spacing:-0.677px;">500</span></span>
<span class="t" style="left:817.50px;top:789px;color:#000;"><span class="k" style="left:-0.34px;">0</span></span>
<span class="t" style="left:836.20px;top:789px;color:#000;"><span class="k" style="left:0.00px;letter-spacing:-0.606px;">21.29</span> <span class="k" style="left:30.00px;letter-spacing:-0.090px;">kbps</span></span>
<span class="t" style="left:954.10px;top:789px;color:#000;"><span class="k" style="left:0.00px;letter-spacing:-0.606px;">0.04%</span></span>
<span class="t" style="left:1026.50px;top:789px;color:#000;"><span class="k" style="left:0.00px;letter-spacing:-0.337px;">Cinemax</span> <span class="k" style="left:48.00px;letter-spacing:-0.172px;">HD</span></span>
<span class="t" style="left:533.00px;top:807px;color:#000;"><span class="k" style="left:0.00px;letter-spacing:-0.676px;">6717</span></span>
<span class="t" style="left:569.00px;top:807px;color:#000;"><span class="k" style="left:0.00px;letter-spacing:-0.617px;">0x1A3D</span></span>
<span class="t" style="left:626.50px;top:807px;color:#000;"><span class="k" style="left:0.00px;letter-spacing:-0.896px;">DVB</span> <span class="k" style="left:25.00px;letter-spacing:-0.115px;">Subtitles</span></span>
<span class="t" style="left:760.50px;top:807px;color:#000;"><span class="k" style="left:0.00px;letter-spacing:-0.680px;">71</span></span>
<span class="t" style="left:817.50px;top:807px;color:#000;"><span class="k" style="left:-0.34px;">0</span></span>
<span class="t" style="left:836.20px;top:807px;color:#000;"><span class="k" style="left:0.00px;letter-spacing:-0.590px;">3.02</span> <span class="k" style="left:24.00px;letter-spacing:-0.090px;">kbps</span></span>
<span class="t" style="left:954.10px;top:807px;color:#000;"><span class="k" style="left:0.00px;letter-spacing:-0.606px;">0.01%</span></span>
<span class="t" style="left:1026.50px;top:807px;color:#000;"><span class="k" style="left:0.00px;letter-spacing:-0.337px;">Cinemax</span> <span class="k" style="left:48.00px;letter-spacing:-0.172px;">HD</span></span>
<span class="t" style="left:534.00px;top:825px;color:#000;"><span class="k" style="left:0.00px;letter-spacing:-0.676px;">6718</span></span>
<span class="t" style="left:570.00px;top:825px;color:#000;"><span class="k" style="left:0.00px;letter-spacing:-0.839px;">0x1A3E</span></span>
<span class="t" style="left:626.50px;top:825px;color:#000;"><span class="k" style="left:0.00px;letter-spacing:-0.896px;">DVB</span> <span class="k" style="left:25.00px;letter-spacing:-0.115px;">Subtitles</span></span>
<span class="t" style="left:748.50px;top:825px;color:#000;"><span class="k" style="left:0.00px;letter-spacing:-0.230px;">1117</span></span>
<span class="t" style="left:817.50px;top:825px;color:#000;"><span class="k" style="left:-0.34px;">0</span></span>
<span class="t" style="left:836.20px;top:825px;color:#000;"><span class="k" style="left:0.00px;letter-spacing:-0.606px;">47.55</span> <span class="k" style="left:30.00px;letter-spacing:-0.090px;">kbps</span></span>
<span class="t" style="left:954.10px;top:825px;color:#000;"><span class="k" style="left:0.00px;letter-spacing:-0.606px;">0.09%</span></span>
<span class="t" style="left:1026.50px;top:825px;color:#000;"><span class="k" style="left:0.00px;letter-spacing:-0.337px;">Cinemax</span> <span class="k" style="left:48.00px;letter-spacing:-0.172px;">HD</span></span>
<span class="t" style="left:535.00px;top:843px;color:#000;"><span class="k" style="left:0.00px;letter-spacing:-0.676px;">8191</span></span>
<span class="t" style="left:571.00px;top:843px;color:#000;"><span class="k" style="left:0.00px;letter-spacing:-1.057px;">0x1FFF</span></span>
<span class="t" style="left:626.50px;top:843px;color:#000;"><span class="k" style="left:0.00px;letter-spacing:0.332px;">Null</span> <span class="k" style="left:25.00px;letter-spacing:-0.384px;">Packets</span></span>
<span class="t" style="left:736.50px;top:843px;color:#000;"><span class="k" style="left:0.00px;letter-spacing:-0.674px;">175393</span></span>
<span class="t" style="left:817.50px;top:843px;color:#000;"><span class="k" style="left:-0.34px;">0</span></span>
<span class="t" style="left:836.20px;top:843px;color:#000;"><span class="k" style="left:0.00px;letter-spacing:-0.590px;">7.47</span> <span class="k" style="left:24.00px;letter-spacing:0.164px;">Mbps</span></span>
<span class="t" style="left:951.10px;top:843px;color:#0c1c1c;"><span class="k" style="left:0.00px;letter-spacing:-0.617px;">14.67%</span></span>
<span class="t" style="left:553.50px;top:954.5px;color:#000;"><span class="k" style="left:0.00px;letter-spacing:-0.384px;">Restart</span></span>
<span class="t" style="left:653.50px;top:954.5px;color:#000;"><span class="k" style="left:0.00px;letter-spacing:-0.004px;">Copy</span> <span class="k" style="left:31.00px;letter-spacing:-1.005px;">URL</span></span>
<span class="t" style="left:756.50px;top:954.5px;color:#000;"><span class="k" style="left:0.00px;letter-spacing:-0.840px;">Save</span> <span class="k" style="left:27.00px;letter-spacing:-0.844px;">as</span> <span class="k" style="left:41.00px;letter-spacing:-1.229px;">CSV</span></span>
<span class="t" style="left:551.00px;top:988.5px;color:#838383;"><span class="k" style="left:0.00px;letter-spacing:-0.241px;">Preview</span></span>
<span class="t" style="left:639.50px;top:988.5px;color:#000;"><span class="k" style="left:0.00px;letter-spacing:-0.269px;">Start</span> <span class="k" style="left:27.00px;letter-spacing:-0.189px;">Streaming</span></span>
<span class="t" style="left:747.00px;top:988.5px;color:#000;"><span class="k" style="left:0.00px;letter-spacing:-0.269px;">Start</span> <span class="k" style="left:27.00px;letter-spacing:-0.078px;">Recording</span></span>
<span class="t" style="left:970.00px;top:949px;color:#000;"><span class="k" style="left:0.00px;letter-spacing:-0.340px;">Data</span> <span class="k" style="left:27.00px;letter-spacing:-0.537px;">Rate:</span></span>
<span class="t" style="left:1040.00px;top:949px;color:#000;"><span class="k" style="left:0.00px;letter-spacing:-0.606px;">50.88</span> <span class="k" style="left:30.00px;letter-spacing:0.164px;">Mbps</span></span>
<span class="t" style="left:970.00px;top:965px;color:#000;"><span class="k" style="left:0.00px;letter-spacing:0.039px;">Quality:</span></span>
<span class="t" style="left:1040.00px;top:965px;color:#000;"><span class="k" style="left:0.00px;letter-spacing:-0.677px;">100</span> <span class="k" style="left:20.66px;">%</span></span>
<span class="t" style="left:970.00px;top:981px;color:#000;"><span class="k" style="left:0.00px;letter-spacing:-0.672px;">Rec.</span> <span class="k" style="left:25.00px;letter-spacing:-0.312px;">Time:</span></span>
<span class="t" style="left:1040.00px;top:981px;color:#000;"><span class="k" style="left:0.00px;letter-spacing:-0.590px;">00:00:00</span></span>
<span class="t" style="left:970.00px;top:997px;color:#000;"><span class="k" style="left:0.00px;letter-spacing:0.109px;">Written:</span></span>
<span class="t" style="left:1040.00px;top:997px;color:#000;"><span class="k" style="left:-0.34px;">0</span> <span class="k" style="left:9.00px;letter-spacing:0.000px;">MB</span></span>
</div></body></html>
